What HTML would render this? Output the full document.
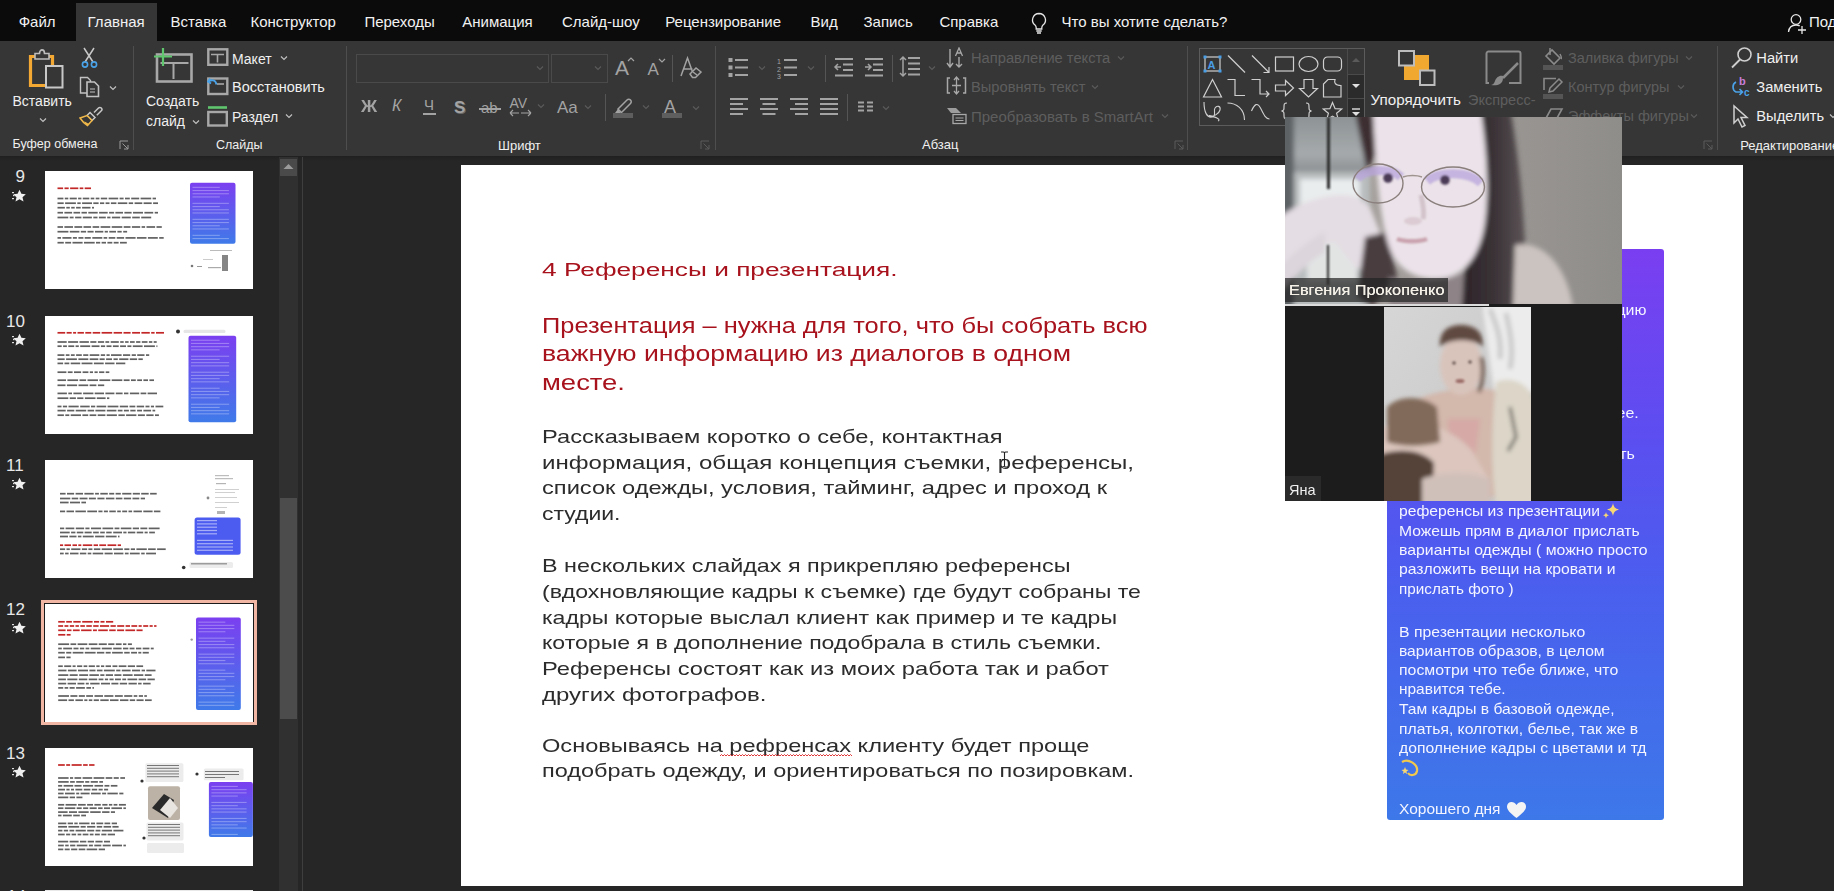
<!DOCTYPE html>
<html><head><meta charset="utf-8"><title>PowerPoint</title>
<style>
html,body{margin:0;padding:0}
body{width:1834px;height:891px;overflow:hidden;position:relative;background:#262626;font-family:"Liberation Sans",sans-serif}
.t{position:absolute;white-space:pre;line-height:1;font-family:"Liberation Sans",sans-serif}
.r{position:absolute;display:block}
</style></head><body>
<div class="r" style="left:0px;top:0px;width:1834px;height:41px;background:#0b0b0b;"></div>
<div class="r" style="left:76px;top:3px;width:81px;height:38px;background:#363636;"></div>
<div class="t " style="left:18.7px;top:14.30px;font-size:15px;color:#f2f2f2;font-weight:400;">Файл</div>
<div class="t " style="left:87.6px;top:14.30px;font-size:15px;color:#f2f2f2;font-weight:400;">Главная</div>
<div class="t " style="left:170.6px;top:14.30px;font-size:15px;color:#f2f2f2;font-weight:400;">Вставка</div>
<div class="t " style="left:250.4px;top:14.30px;font-size:15px;color:#f2f2f2;font-weight:400;">Конструктор</div>
<div class="t " style="left:364.4px;top:14.30px;font-size:15px;color:#f2f2f2;font-weight:400;">Переходы</div>
<div class="t " style="left:462.3px;top:14.30px;font-size:15px;color:#f2f2f2;font-weight:400;">Анимация</div>
<div class="t " style="left:562px;top:14.30px;font-size:15px;color:#f2f2f2;font-weight:400;">Слайд-шоу</div>
<div class="t " style="left:665.2px;top:14.30px;font-size:15px;color:#f2f2f2;font-weight:400;">Рецензирование</div>
<div class="t " style="left:810.6px;top:14.30px;font-size:15px;color:#f2f2f2;font-weight:400;">Вид</div>
<div class="t " style="left:863.5px;top:14.30px;font-size:15px;color:#f2f2f2;font-weight:400;">Запись</div>
<div class="t " style="left:939.4px;top:14.30px;font-size:15px;color:#f2f2f2;font-weight:400;">Справка</div>
<div class="t " style="left:1061.5px;top:14.30px;font-size:15px;color:#f2f2f2;font-weight:400;">Что вы хотите сделать?</div>
<div class="t " style="left:1809px;top:14.30px;font-size:15px;color:#f2f2f2;font-weight:400;">Поделиться</div>
<svg class="r" style="left:1028px;top:11px;" width="22" height="24" viewBox="0 0 22 24"><path d="M11 2.5a6.5 6.5 0 0 0-4 11.6c.8.7 1.2 1.6 1.2 2.6V18h5.6v-1.3c0-1 .4-1.9 1.2-2.6A6.5 6.5 0 0 0 11 2.5z" fill="none" stroke="#e6e6e6" stroke-width="1.3"/><path d="M8.3 20h5.4M9 22h4" stroke="#e6e6e6" stroke-width="1.3"/></svg>
<svg class="r" style="left:1786px;top:12px;" width="22" height="22" viewBox="0 0 22 22"><circle cx="10" cy="7.5" r="4.8" fill="none" stroke="#e6e6e6" stroke-width="1.3"/><path d="M2.5 20c.5-4.5 3.5-7 7.5-7 1.5 0 2.7.3 3.7.9" fill="none" stroke="#e6e6e6" stroke-width="1.3"/><path d="M16 14v8M12 18h8" stroke="#e6e6e6" stroke-width="1.3"/></svg>
<div class="r" style="left:0px;top:41px;width:1834px;height:115px;background:#363636;"></div>
<div class="r" style="left:133px;top:46px;width:1px;height:104px;background:#4e4e4e;"></div>
<div class="r" style="left:345.5px;top:46px;width:1px;height:104px;background:#4e4e4e;"></div>
<div class="r" style="left:714.5px;top:46px;width:1px;height:104px;background:#4e4e4e;"></div>
<div class="r" style="left:1187px;top:46px;width:1px;height:104px;background:#4e4e4e;"></div>
<div class="r" style="left:1717px;top:46px;width:1px;height:104px;background:#4e4e4e;"></div>
<svg class="r" style="left:27px;top:49px;" width="40" height="41" viewBox="0 0 40 41"><path d="M3.5 7.5h22v29h-22z" fill="none" stroke="#f2a833" stroke-width="3.2"/><path d="M8 4.5h4.5c0-2.5 1.5-3.6 2.5-3.6s2.5 1.1 2.5 3.6H22v5.5H8z" fill="#363636" stroke="#bdbdbd" stroke-width="1.6"/><rect x="19" y="17" width="16.5" height="21.5" fill="#363636" stroke="#c8c8c8" stroke-width="2"/></svg>
<div class="t " style="left:12.5px;top:94.15px;font-size:14px;color:#f0f0f0;font-weight:400;">Вставить</div>
<svg class="r" style="left:39px;top:117px;" width="8" height="6" viewBox="0 0 8 6"><path d="M1 1.5l3 3 3-3" fill="none" stroke="#c0c0c0" stroke-width="1.2"/></svg>
<svg class="r" style="left:81px;top:47px;" width="18" height="22" viewBox="0 0 18 22"><path d="M3 1l9 14M13 1L4 15" stroke="#c8c8c8" stroke-width="1.5"/><circle cx="4" cy="17.5" r="2.6" fill="none" stroke="#4aa3e8" stroke-width="1.6"/><circle cx="13" cy="17.5" r="2.6" fill="none" stroke="#4aa3e8" stroke-width="1.6"/></svg>
<svg class="r" style="left:79px;top:76px;" width="24" height="22" viewBox="0 0 24 22"><path d="M1.5 1.5h7l3 3V17h-10z" fill="none" stroke="#c2c2c2" stroke-width="1.4"/><path d="M8 6h7.5l4 4v10.5H8z" fill="#363636" stroke="#c2c2c2" stroke-width="1.6"/><path d="M11 13h5M11 16h5" stroke="#c2c2c2" stroke-width="1.2"/></svg>
<svg class="r" style="left:109px;top:85px;" width="8" height="6" viewBox="0 0 8 6"><path d="M1 1.5l3 3 3-3" fill="none" stroke="#c0c0c0" stroke-width="1.2"/></svg>
<svg class="r" style="left:79px;top:104px;" width="24" height="23" viewBox="0 0 24 23"><path d="M15 8.5l4.5-4.5c.8-.8 2-.8 2.8 0s.8 2 0 2.8L17.8 11.3" fill="none" stroke="#c8c8c8" stroke-width="1.5"/><path d="M11 8.5l5 5-3 3-5-5z" fill="#363636" stroke="#c8c8c8" stroke-width="1.5"/><path d="M8 11.5l5 5-4.5 5c-2.5-1.5-5.5-4.5-7.5-7.5z" fill="#363636" stroke="#f0b84a" stroke-width="1.5"/><path d="M5.2 17.3l4.8 2.6-1.5 1.6c-1.4-.8-2.4-1.8-3.3-4.2z" fill="#f0b84a"/></svg>
<div class="t " style="left:12.5px;top:138.42px;font-size:12.5px;color:#f0f0f0;font-weight:400;">Буфер обмена</div>
<svg class="r" style="left:119px;top:140px;" width="11" height="10" viewBox="0 0 11 10"><path d="M1 9V1h8" fill="none" stroke="#9a9a9a" stroke-width="1"/><path d="M3.5 3.5l5.5 5.5M9 5v4H5" fill="none" stroke="#9a9a9a" stroke-width="1"/></svg>
<svg class="r" style="left:152px;top:46px;" width="44" height="38" viewBox="0 0 44 38"><rect x="5" y="8.5" width="34.5" height="27" fill="none" stroke="#a8a8a8" stroke-width="2.6"/><path d="M8.5 17h28M21.5 17v16" stroke="#a8a8a8" stroke-width="2"/><path d="M2 10.5h18M11 2v18" stroke="#5fc66e" stroke-width="2.2"/></svg>
<div class="t " style="left:146px;top:94.15px;font-size:14px;color:#f0f0f0;font-weight:400;">Создать</div>
<div class="t " style="left:146px;top:113.65px;font-size:14px;color:#f0f0f0;font-weight:400;">слайд</div>
<svg class="r" style="left:192px;top:119px;" width="8" height="6" viewBox="0 0 8 6"><path d="M1 1.5l3 3 3-3" fill="none" stroke="#c0c0c0" stroke-width="1.2"/></svg>
<svg class="r" style="left:207px;top:48px;" width="22" height="19" viewBox="0 0 22 19"><rect x="1.3" y="1.3" width="19" height="15.5" fill="none" stroke="#a8a8a8" stroke-width="2.4"/><path d="M4 6.5h13M10.5 6.5v8" stroke="#a8a8a8" stroke-width="1.6"/></svg>
<div class="t " style="left:232px;top:52.35px;font-size:14px;color:#f0f0f0;font-weight:400;">Макет</div>
<svg class="r" style="left:279.5px;top:55px;" width="8" height="6" viewBox="0 0 8 6"><path d="M1 1.5l3 3 3-3" fill="none" stroke="#c0c0c0" stroke-width="1.2"/></svg>
<svg class="r" style="left:207px;top:76px;" width="22" height="20" viewBox="0 0 22 20"><rect x="1.3" y="2.5" width="19" height="15.5" fill="none" stroke="#a8a8a8" stroke-width="2.4"/><path d="M10 8h7" stroke="#a8a8a8" stroke-width="1.6"/><path d="M3 2.5l-2 3 3 2M1.5 5.5c3-2 7-2 8 3" fill="none" stroke="#4aa3e8" stroke-width="1.8"/></svg>
<div class="t " style="left:232px;top:80.23px;font-size:14.5px;color:#f0f0f0;font-weight:400;">Восстановить</div>
<svg class="r" style="left:207px;top:104px;" width="22" height="23" viewBox="0 0 22 23"><path d="M1 3.5h19" stroke="#5fc66e" stroke-width="2.6"/><rect x="1.3" y="8" width="18.5" height="13.5" fill="none" stroke="#a8a8a8" stroke-width="2.4"/></svg>
<div class="t " style="left:232px;top:109.65px;font-size:14px;color:#f0f0f0;font-weight:400;">Раздел</div>
<svg class="r" style="left:285px;top:113px;" width="8" height="6" viewBox="0 0 8 6"><path d="M1 1.5l3 3 3-3" fill="none" stroke="#c0c0c0" stroke-width="1.2"/></svg>
<div class="t " style="left:216px;top:139.12px;font-size:12.5px;color:#f0f0f0;font-weight:400;">Слайды</div>
<div class="r" style="left:356px;top:54px;width:193px;height:29px;background:transparent;border:1px solid #4a4a4a;box-sizing:border-box"></div>
<div class="r" style="left:551px;top:54px;width:57px;height:29px;background:transparent;border:1px solid #4a4a4a;box-sizing:border-box"></div>
<svg class="r" style="left:536px;top:65px;" width="8" height="6" viewBox="0 0 8 6"><path d="M1 1.5l3 3 3-3" fill="none" stroke="#5a5a5a" stroke-width="1.2"/></svg>
<svg class="r" style="left:594px;top:65px;" width="8" height="6" viewBox="0 0 8 6"><path d="M1 1.5l3 3 3-3" fill="none" stroke="#5a5a5a" stroke-width="1.2"/></svg>
<div class="t " style="left:615px;top:57.22px;font-size:21px;color:#a3a3a3;font-weight:400;font-weight:300">A</div>
<svg class="r" style="left:627px;top:56px;" width="8" height="6" viewBox="0 0 8 6"><path d="M1 5l3-3 3 3" fill="none" stroke="#a3a3a3" stroke-width="1.2"/></svg>
<div class="t " style="left:647.5px;top:60.61px;font-size:17px;color:#a3a3a3;font-weight:400;">A</div>
<svg class="r" style="left:658px;top:58px;" width="8" height="6" viewBox="0 0 8 6"><path d="M1 1l3 3 3-3" fill="none" stroke="#a3a3a3" stroke-width="1.2"/></svg>
<div class="r" style="left:672px;top:55px;width:1px;height:27px;background:#555;"></div>
<svg class="r" style="left:679px;top:56px;" width="24" height="24" viewBox="0 0 24 24"><path d="M2 20L8.5 2 15 20M4.5 13h9" fill="none" stroke="#a3a3a3" stroke-width="1.5"/><path d="M11 18l6-6 5 4-5.5 5.5h-3z" fill="#363636" stroke="#a3a3a3" stroke-width="1.5"/><path d="M14 16l4 3" stroke="#a3a3a3" stroke-width="1.5"/></svg>
<div class="t " style="left:361px;top:97.61px;font-size:17px;color:#a3a3a3;font-weight:400;transform:scaleX(1.05);transform-origin:0 0;font-weight:700">Ж</div>
<div class="t " style="left:392px;top:98.46px;font-size:16px;color:#a3a3a3;font-weight:400;font-style:italic">К</div>
<div class="t " style="left:424px;top:97.30px;font-size:15px;color:#a3a3a3;font-weight:400;">Ч</div>
<div class="r" style="left:423px;top:113px;width:13px;height:1.5px;background:#a3a3a3;"></div>
<div class="t " style="left:454px;top:98.61px;font-size:17px;color:#a3a3a3;font-weight:400;font-weight:700;text-shadow:1px 1px 0 #6a6a6a">S</div>
<div class="t " style="left:481px;top:100.30px;font-size:15px;color:#a3a3a3;font-weight:400;">ab</div>
<div class="r" style="left:479px;top:108px;width:22px;height:1.5px;background:#a3a3a3;"></div>
<div class="t " style="left:509.5px;top:96.15px;font-size:14px;color:#a3a3a3;font-weight:400;">AV</div>
<svg class="r" style="left:509px;top:109px;" width="23" height="8" viewBox="0 0 23 8"><path d="M1 4h9M1 4l3-3M1 4l3 3M12 4h10M22 4l-3-3M22 4l-3 3" fill="none" stroke="#a3a3a3" stroke-width="1.1"/></svg>
<svg class="r" style="left:537px;top:103px;" width="8" height="6" viewBox="0 0 8 6"><path d="M1 1.5l3 3 3-3" fill="none" stroke="#5a5a5a" stroke-width="1.2"/></svg>
<div class="t " style="left:557px;top:98.61px;font-size:17px;color:#a3a3a3;font-weight:400;">Aa</div>
<svg class="r" style="left:584px;top:104px;" width="8" height="6" viewBox="0 0 8 6"><path d="M1 1.5l3 3 3-3" fill="none" stroke="#5a5a5a" stroke-width="1.2"/></svg>
<div class="r" style="left:604.5px;top:94px;width:1px;height:27px;background:#555;"></div>
<svg class="r" style="left:612px;top:96px;" width="22" height="24" viewBox="0 0 22 24"><path d="M6 13l9-9c1-1 2.5-1 3.5 0s1 2.5 0 3.5l-9 9z" fill="none" stroke="#a3a3a3" stroke-width="1.5"/><path d="M6 13l-3 4h6" fill="#a3a3a3"/><rect x="1" y="17" width="20" height="5" fill="#5e5e5e"/></svg>
<svg class="r" style="left:642px;top:104px;" width="8" height="6" viewBox="0 0 8 6"><path d="M1 1.5l3 3 3-3" fill="none" stroke="#5a5a5a" stroke-width="1.2"/></svg>
<div class="t " style="left:664px;top:97.76px;font-size:18px;color:#a3a3a3;font-weight:400;">A</div>
<div class="r" style="left:662px;top:113px;width:20px;height:5px;background:#5e5e5e;"></div>
<svg class="r" style="left:692px;top:105px;" width="8" height="6" viewBox="0 0 8 6"><path d="M1 1.5l3 3 3-3" fill="none" stroke="#5a5a5a" stroke-width="1.2"/></svg>
<div class="t " style="left:498px;top:138.70px;font-size:13px;color:#f0f0f0;font-weight:400;">Шрифт</div>
<svg class="r" style="left:700px;top:140px;" width="11" height="10" viewBox="0 0 11 10"><path d="M1 9V1h8" fill="none" stroke="#5a5a5a" stroke-width="1"/><path d="M3.5 3.5l5.5 5.5M9 5v4H5" fill="none" stroke="#5a5a5a" stroke-width="1"/></svg>
<svg class="r" style="left:727px;top:56px;" width="24" height="22" viewBox="0 0 24 22"><rect x="1.5" y="2.0" width="4" height="4" fill="#a3a3a3"/><path d="M8 4.0h13" stroke="#a3a3a3" stroke-width="2"/><rect x="1.5" y="9.5" width="4" height="4" fill="#a3a3a3"/><path d="M8 11.5h13" stroke="#a3a3a3" stroke-width="2"/><rect x="1.5" y="17.0" width="4" height="4" fill="#a3a3a3"/><path d="M8 19.0h13" stroke="#a3a3a3" stroke-width="2"/></svg>
<svg class="r" style="left:758px;top:65px;" width="8" height="6" viewBox="0 0 8 6"><path d="M1 1.5l3 3 3-3" fill="none" stroke="#5a5a5a" stroke-width="1.2"/></svg>
<svg class="r" style="left:776px;top:55px;" width="24" height="24" viewBox="0 0 24 24"><text x="1" y="9" font-size="7" fill="#a3a3a3" font-family="Liberation Sans">1</text><text x="1" y="16.5" font-size="7" fill="#a3a3a3" font-family="Liberation Sans">2</text><text x="1" y="24" font-size="7" fill="#a3a3a3" font-family="Liberation Sans">3</text><path d="M8 5.0h13" stroke="#a3a3a3" stroke-width="2"/><path d="M8 12.5h13" stroke="#a3a3a3" stroke-width="2"/><path d="M8 20.0h13" stroke="#a3a3a3" stroke-width="2"/></svg>
<svg class="r" style="left:807px;top:65px;" width="8" height="6" viewBox="0 0 8 6"><path d="M1 1.5l3 3 3-3" fill="none" stroke="#5a5a5a" stroke-width="1.2"/></svg>
<div class="r" style="left:825px;top:55px;width:1px;height:27px;background:#555;"></div>
<svg class="r" style="left:833px;top:56px;" width="24" height="22" viewBox="0 0 24 22"><path d="M2 3h18M10 8.5h10M10 14h10M2 19.5h18" stroke="#a3a3a3" stroke-width="2"/><path d="M8 11H2M5 8l-3 3 3 3" fill="none" stroke="#a3a3a3" stroke-width="1.5"/></svg>
<svg class="r" style="left:863px;top:56px;" width="24" height="22" viewBox="0 0 24 22"><path d="M2 3h18M10 8.5h10M10 14h10M2 19.5h18" stroke="#a3a3a3" stroke-width="2"/><path d="M2 11h6M5 8l3 3-3 3" fill="none" stroke="#a3a3a3" stroke-width="1.5"/></svg>
<div class="r" style="left:892px;top:55px;width:1px;height:27px;background:#555;"></div>
<svg class="r" style="left:899px;top:55px;" width="26" height="24" viewBox="0 0 26 24"><path d="M9 3h12M9 8.5h12M9 14h12M9 19.5h12" stroke="#a3a3a3" stroke-width="2"/><path d="M4 2v19M1 5l3-3 3 3M1 18l3 3 3-3" fill="none" stroke="#a3a3a3" stroke-width="1.5"/></svg>
<svg class="r" style="left:928px;top:65px;" width="8" height="6" viewBox="0 0 8 6"><path d="M1 1.5l3 3 3-3" fill="none" stroke="#5a5a5a" stroke-width="1.2"/></svg>
<svg class="r" style="left:730px;top:98px;" width="19" height="18" viewBox="0 0 19 18"><path d="M0 1h18" stroke="#a3a3a3" stroke-width="2"/><path d="M0 6h13" stroke="#a3a3a3" stroke-width="2"/><path d="M0 11h18" stroke="#a3a3a3" stroke-width="2"/><path d="M0 16h13" stroke="#a3a3a3" stroke-width="2"/></svg>
<svg class="r" style="left:760px;top:98px;" width="19" height="18" viewBox="0 0 19 18"><path d="M0 1h18" stroke="#a3a3a3" stroke-width="2"/><path d="M2.5 6h13" stroke="#a3a3a3" stroke-width="2"/><path d="M0 11h18" stroke="#a3a3a3" stroke-width="2"/><path d="M2.5 16h13" stroke="#a3a3a3" stroke-width="2"/></svg>
<svg class="r" style="left:790px;top:98px;" width="19" height="18" viewBox="0 0 19 18"><path d="M0 1h18" stroke="#a3a3a3" stroke-width="2"/><path d="M5 6h13" stroke="#a3a3a3" stroke-width="2"/><path d="M0 11h18" stroke="#a3a3a3" stroke-width="2"/><path d="M5 16h13" stroke="#a3a3a3" stroke-width="2"/></svg>
<svg class="r" style="left:820px;top:98px;" width="19" height="18" viewBox="0 0 19 18"><path d="M0 1h18" stroke="#a3a3a3" stroke-width="2"/><path d="M0 6h18" stroke="#a3a3a3" stroke-width="2"/><path d="M0 11h18" stroke="#a3a3a3" stroke-width="2"/><path d="M0 16h18" stroke="#a3a3a3" stroke-width="2"/></svg>
<div class="r" style="left:847px;top:94px;width:1px;height:27px;background:#555;"></div>
<svg class="r" style="left:857px;top:101px;" width="18" height="12" viewBox="0 0 18 12"><path d="M1 1.5h6M10 1.5h6M1 5.5h6M10 5.5h6M1 9.5h6M10 9.5h6" stroke="#a3a3a3" stroke-width="2"/></svg>
<svg class="r" style="left:882px;top:105px;" width="8" height="6" viewBox="0 0 8 6"><path d="M1 1.5l3 3 3-3" fill="none" stroke="#5a5a5a" stroke-width="1.2"/></svg>
<svg class="r" style="left:946px;top:47px;" width="22" height="23" viewBox="0 0 22 23"><path d="M4 2v18M1 16l3 4 3-4M13 10v10M10 17l3 3 3-3" fill="none" stroke="#a8a8a8" stroke-width="1.4"/><path d="M9.5 9l3.5-8 3.5 8M10.8 6h4.5" fill="none" stroke="#a8a8a8" stroke-width="1.3"/></svg>
<div class="t " style="left:971px;top:51.26px;font-size:14.7px;color:#5e5e5e;font-weight:400;">Направление текста</div>
<svg class="r" style="left:1117px;top:55px;" width="8" height="6" viewBox="0 0 8 6"><path d="M1 1.5l3 3 3-3" fill="none" stroke="#5a5a5a" stroke-width="1.2"/></svg>
<svg class="r" style="left:946px;top:76px;" width="22" height="20" viewBox="0 0 22 20"><path d="M4 2H1.5v15H4M17 2h2.5v15H17" fill="none" stroke="#a8a8a8" stroke-width="1.5"/><path d="M6 9.5h9M10.5 1v17M8 4l2.5-3 2.5 3M8 15l2.5 3 2.5-3" fill="none" stroke="#a8a8a8" stroke-width="1.3"/></svg>
<div class="t " style="left:971px;top:79.76px;font-size:14.7px;color:#5e5e5e;font-weight:400;">Выровнять текст</div>
<svg class="r" style="left:1091px;top:84px;" width="8" height="6" viewBox="0 0 8 6"><path d="M1 1.5l3 3 3-3" fill="none" stroke="#5a5a5a" stroke-width="1.2"/></svg>
<svg class="r" style="left:946px;top:107px;" width="22" height="18" viewBox="0 0 22 18"><path d="M1 1h9l5 5H5z" fill="#a8a8a8" opacity=".9"/><rect x="7" y="7.5" width="13" height="9" fill="#363636" stroke="#a8a8a8" stroke-width="1.3"/><path d="M9.5 11h8M9.5 13.5h8" stroke="#a8a8a8" stroke-width="1"/></svg>
<div class="t " style="left:971px;top:108.70px;font-size:15px;color:#5e5e5e;font-weight:400;">Преобразовать в SmartArt</div>
<svg class="r" style="left:1161px;top:113px;" width="8" height="6" viewBox="0 0 8 6"><path d="M1 1.5l3 3 3-3" fill="none" stroke="#5a5a5a" stroke-width="1.2"/></svg>
<div class="t " style="left:922px;top:138.00px;font-size:13px;color:#f0f0f0;font-weight:400;">Абзац</div>
<svg class="r" style="left:1174px;top:140px;" width="11" height="10" viewBox="0 0 11 10"><path d="M1 9V1h8" fill="none" stroke="#5a5a5a" stroke-width="1"/><path d="M3.5 3.5l5.5 5.5M9 5v4H5" fill="none" stroke="#5a5a5a" stroke-width="1"/></svg>
<div class="r" style="left:1199px;top:48px;width:166px;height:78px;background:transparent;border:1px solid #5c5c5c;box-sizing:border-box"></div>
<div class="r" style="left:1347px;top:49px;width:1px;height:76px;background:#4a4a4a;"></div>
<div class="r" style="left:1348px;top:74px;width:16px;height:24px;background:#2b2b2b;"></div>
<div class="r" style="left:1348px;top:99px;width:16px;height:26px;background:#2b2b2b;"></div>
<div class="r" style="left:1348px;top:74px;width:16px;height:1px;background:#4a4a4a;"></div>
<div class="r" style="left:1348px;top:98px;width:16px;height:1px;background:#4a4a4a;"></div>
<svg class="r" style="left:1350px;top:56px;" width="12" height="8" viewBox="0 0 12 8"><path d="M2 6l4-4 4 4z" fill="#5a5a5a"/></svg>
<svg class="r" style="left:1350px;top:82px;" width="12" height="8" viewBox="0 0 12 8"><path d="M2 2l4 4 4-4z" fill="#e0e0e0"/></svg>
<svg class="r" style="left:1350px;top:107px;" width="12" height="12" viewBox="0 0 12 12"><path d="M2 2h8" stroke="#e0e0e0" stroke-width="1.4"/><path d="M2 5l4 4 4-4z" fill="#e0e0e0"/></svg>
<svg class="r" style="left:1202px;top:54.0px;" width="22" height="21" viewBox="0 0 22 21"><rect x="3" y="3" width="15" height="14" fill="none" stroke="#cfcfcf" stroke-width="1.2"/><text x="5.5" y="14.5" font-size="11" font-weight="700" fill="#4a9ee6" font-family="Liberation Sans">A</text><g fill="#4a9ee6"><rect x="1.5" y="1.5" width="3" height="3"/><rect x="16.5" y="1.5" width="3" height="3"/><rect x="1.5" y="15.5" width="3" height="3"/><rect x="16.5" y="15.5" width="3" height="3"/></g></svg>
<svg class="r" style="left:1226px;top:54.0px;" width="22" height="21" viewBox="0 0 22 21"><path d="M2 1.5l17 17" stroke="#cfcfcf" stroke-width="1.2"/></svg>
<svg class="r" style="left:1250px;top:54.0px;" width="22" height="21" viewBox="0 0 22 21"><path d="M2 1.5l17 17M13.5 18.5h5.5v-5.5" fill="none" stroke="#cfcfcf" stroke-width="1.2"/></svg>
<svg class="r" style="left:1274px;top:54.0px;" width="22" height="21" viewBox="0 0 22 21"><rect x="1.5" y="3" width="18" height="14" fill="none" stroke="#cfcfcf" stroke-width="1.2"/></svg>
<svg class="r" style="left:1298px;top:54.0px;" width="22" height="21" viewBox="0 0 22 21"><ellipse cx="10.5" cy="10" rx="9.5" ry="7.5" fill="none" stroke="#cfcfcf" stroke-width="1.2"/></svg>
<svg class="r" style="left:1322px;top:54.0px;" width="22" height="21" viewBox="0 0 22 21"><rect x="1.5" y="3" width="18" height="14" rx="4" fill="none" stroke="#cfcfcf" stroke-width="1.2"/></svg>
<svg class="r" style="left:1202px;top:77.5px;" width="22" height="21" viewBox="0 0 22 21"><path d="M10.5 1.5l9 17.5h-18z" fill="none" stroke="#cfcfcf" stroke-width="1.2"/></svg>
<svg class="r" style="left:1226px;top:77.5px;" width="22" height="21" viewBox="0 0 22 21"><path d="M1.5 1.5h7.5v16h10" fill="none" stroke="#cfcfcf" stroke-width="1.2"/></svg>
<svg class="r" style="left:1250px;top:77.5px;" width="22" height="21" viewBox="0 0 22 21"><path d="M1.5 1.5h8.5v14.5h9M16 13l3 3-3 3" fill="none" stroke="#cfcfcf" stroke-width="1.2"/></svg>
<svg class="r" style="left:1274px;top:77.5px;" width="22" height="21" viewBox="0 0 22 21"><path d="M1.5 7h10V2.5l8 7.5-8 7.5V13h-10z" fill="none" stroke="#cfcfcf" stroke-width="1.2"/></svg>
<svg class="r" style="left:1298px;top:77.5px;" width="22" height="21" viewBox="0 0 22 21"><path d="M6 1.5h9v9h4.5l-9 8.5-9-8.5H6z" fill="none" stroke="#cfcfcf" stroke-width="1.2"/></svg>
<svg class="r" style="left:1322px;top:77.5px;" width="22" height="21" viewBox="0 0 22 21"><path d="M6 1.5h7c-1 3 0 6 6 6V19H1.5V6z" fill="none" stroke="#cfcfcf" stroke-width="1.2"/></svg>
<svg class="r" style="left:1202px;top:101.0px;" width="22" height="21" viewBox="0 0 22 21"><path d="M2 1c0 10 3 16 8 15s1-6 3-9 6-2 5 2-7 7-10 6 3 0 7 2 1 3 1 3" fill="none" stroke="#cfcfcf" stroke-width="1.1"/></svg>
<svg class="r" style="left:1226px;top:101.0px;" width="22" height="21" viewBox="0 0 22 21"><path d="M1.5 2c9 0 17 6 17 17" fill="none" stroke="#cfcfcf" stroke-width="1.1"/></svg>
<svg class="r" style="left:1250px;top:101.0px;" width="22" height="21" viewBox="0 0 22 21"><path d="M1.5 10c3-7 6-9 9-3s5 11 9 11" fill="none" stroke="#cfcfcf" stroke-width="1.1"/></svg>
<svg class="r" style="left:1274px;top:101.0px;" width="22" height="21" viewBox="0 0 22 21"><path d="M13 2c-3 0-3 1.5-3 4s0 3.5-2.5 4c2.5.5 2.5 1.5 2.5 4s0 4 3 4" fill="none" stroke="#cfcfcf" stroke-width="1.2"/></svg>
<svg class="r" style="left:1298px;top:101.0px;" width="22" height="21" viewBox="0 0 22 21"><path d="M8 2c3 0 3 1.5 3 4s0 3.5 2.5 4c-2.5.5-2.5 1.5-2.5 4s0 4-3 4" fill="none" stroke="#cfcfcf" stroke-width="1.2"/></svg>
<svg class="r" style="left:1322px;top:101.0px;" width="22" height="21" viewBox="0 0 22 21"><path d="M10.5 1.5l2.6 6.2 6.6.3-5.1 4.3 1.8 6.5-5.9-3.7-5.9 3.7 1.8-6.5L1.3 8l6.6-.3z" fill="none" stroke="#cfcfcf" stroke-width="1.2"/></svg>
<svg class="r" style="left:1397px;top:49px;" width="40" height="38" viewBox="0 0 40 38"><rect x="7" y="6" width="25" height="25" fill="#f0a830"/><rect x="2" y="2" width="15" height="14.5" fill="#363636" stroke="#bdbdbd" stroke-width="2"/><rect x="23" y="21.5" width="14.5" height="14.5" fill="#363636" stroke="#bdbdbd" stroke-width="2"/></svg>
<div class="t " style="left:1370.5px;top:91.93px;font-size:15.2px;color:#f0f0f0;font-weight:400;">Упорядочить</div>
<svg class="r" style="left:1483px;top:49px;" width="42" height="40" viewBox="0 0 42 40"><path d="M6 34H3.5V4.5a2 2 0 0 1 2-2h30a2 2 0 0 1 2 2V34H26" fill="none" stroke="#8a8a8a" stroke-width="2"/><path d="M35 14L20 29" stroke="#8a8a8a" stroke-width="2.5"/><path d="M20 27c-4-1-7 2-8 5s-3 4-4 4c5 1 12 0 12-7z" fill="#8a8a8a"/></svg>
<div class="t " style="left:1468px;top:92.53px;font-size:14.5px;color:#5e5e5e;font-weight:400;">Экспресс-</div>
<svg class="r" style="left:1541px;top:46px;" width="26" height="24" viewBox="0 0 26 24"><path d="M5 10l6-6 8 8-6 6z" fill="none" stroke="#8a8a8a" stroke-width="1.6"/><path d="M9 2v7M19 8c1 2 2 4 1 5" fill="none" stroke="#8a8a8a" stroke-width="1.5"/><rect x="2" y="19" width="20" height="5" fill="#555"/></svg>
<div class="t " style="left:1568px;top:51.23px;font-size:14.5px;color:#5e5e5e;font-weight:400;">Заливка фигуры</div>
<svg class="r" style="left:1685px;top:55px;" width="8" height="6" viewBox="0 0 8 6"><path d="M1 1.5l3 3 3-3" fill="none" stroke="#5a5a5a" stroke-width="1.2"/></svg>
<svg class="r" style="left:1541px;top:75px;" width="26" height="24" viewBox="0 0 26 24"><path d="M3 15V3.5h12" fill="none" stroke="#8a8a8a" stroke-width="1.6"/><path d="M9 13l9-9 3 3-9 9-4 1z" fill="none" stroke="#8a8a8a" stroke-width="1.5"/><rect x="2" y="19" width="20" height="5" fill="#555"/></svg>
<div class="t " style="left:1568px;top:79.73px;font-size:14.5px;color:#5e5e5e;font-weight:400;">Контур фигуры</div>
<svg class="r" style="left:1677px;top:84px;" width="8" height="6" viewBox="0 0 8 6"><path d="M1 1.5l3 3 3-3" fill="none" stroke="#5a5a5a" stroke-width="1.2"/></svg>
<svg class="r" style="left:1541px;top:104px;" width="26" height="20" viewBox="0 0 26 20"><path d="M4 16l6-11h11l-6 11z" fill="none" stroke="#8a8a8a" stroke-width="1.6"/></svg>
<div class="t " style="left:1568px;top:108.73px;font-size:14.5px;color:#5e5e5e;font-weight:400;">Эффекты фигуры</div>
<svg class="r" style="left:1690px;top:113px;" width="8" height="6" viewBox="0 0 8 6"><path d="M1 1.5l3 3 3-3" fill="none" stroke="#5a5a5a" stroke-width="1.2"/></svg>
<svg class="r" style="left:1703px;top:140px;" width="11" height="10" viewBox="0 0 11 10"><path d="M1 9V1h8" fill="none" stroke="#5a5a5a" stroke-width="1"/><path d="M3.5 3.5l5.5 5.5M9 5v4H5" fill="none" stroke="#5a5a5a" stroke-width="1"/></svg>
<svg class="r" style="left:1730px;top:46px;" width="24" height="23" viewBox="0 0 24 23"><circle cx="14.5" cy="8.5" r="6.5" fill="none" stroke="#cfcfcf" stroke-width="1.6"/><path d="M10 13.5L2 21.5" stroke="#cfcfcf" stroke-width="1.8"/></svg>
<div class="t " style="left:1756.3px;top:51.36px;font-size:14.7px;color:#f0f0f0;font-weight:400;">Найти</div>
<svg class="r" style="left:1730px;top:75px;" width="24" height="24" viewBox="0 0 24 24"><text x="9" y="10" font-size="11" font-weight="700" fill="#c77ed9" font-family="Liberation Sans">b</text><text x="14" y="21" font-size="10" font-weight="700" fill="#4aa3e8" font-family="Liberation Sans">c</text><path d="M6 7c-4 2-4 8 0 10h6M9.5 14l3 3-3 3" fill="none" stroke="#4aa3e8" stroke-width="1.6"/></svg>
<div class="t " style="left:1756.3px;top:79.56px;font-size:14.7px;color:#f0f0f0;font-weight:400;">Заменить</div>
<svg class="r" style="left:1731px;top:104px;" width="20" height="24" viewBox="0 0 20 24"><path d="M3 2v17l4-4 4 8 3-1.5-4-8h6z" fill="none" stroke="#cfcfcf" stroke-width="1.5"/></svg>
<div class="t " style="left:1756.3px;top:108.56px;font-size:14.7px;color:#f0f0f0;font-weight:400;">Выделить</div>
<svg class="r" style="left:1829px;top:113px;" width="8" height="6" viewBox="0 0 8 6"><path d="M1 1.5l3 3 3-3" fill="none" stroke="#c0c0c0" stroke-width="1.2"/></svg>
<div class="t " style="left:1740.2px;top:139.00px;font-size:13px;color:#f0f0f0;font-weight:400;">Редактирование</div>
<div class="r" style="left:0px;top:156px;width:1834px;height:735px;background:#262626;"></div>
<div class="r" style="left:0px;top:156px;width:1834px;height:5px;background:linear-gradient(#202020,#262626);"></div>
<div class="r" style="left:279px;top:157px;width:19px;height:734px;background:#303030;"></div>
<div class="r" style="left:280px;top:158.5px;width:17px;height:17.5px;background:#4a4a4a;"></div>
<svg class="r" style="left:282px;top:161px;" width="13" height="10" viewBox="0 0 13 10"><path d="M1.5 8l5-5 5 5z" fill="#9a9a9a"/></svg>
<div class="r" style="left:280px;top:497.5px;width:17px;height:221.5px;background:#4c4c4c;"></div>
<div class="r" style="left:302px;top:157px;width:1px;height:734px;background:#3e3e3e;"></div>
<svg class="r" style="left:45px;top:171px;" width="208" height="118" viewBox="0 0 208 118"><rect width="208" height="118" fill="#fff"/><rect x="12.5" y="16.45" width="5.6" height="1.7" fill="#b80000" opacity="0.85"/><rect x="19.5" y="16.45" width="4.2" height="1.7" fill="#b80000" opacity="0.85"/><rect x="25.1" y="16.45" width="8.2" height="1.7" fill="#b80000" opacity="0.85"/><rect x="34.7" y="16.45" width="3.6" height="1.7" fill="#b80000" opacity="0.85"/><rect x="39.7" y="16.45" width="6.3" height="1.7" fill="#b80000" opacity="0.85"/><rect x="12.5" y="26.65" width="5.9" height="1.7" fill="#151515" opacity="0.68"/><rect x="19.8" y="26.65" width="3.5" height="1.7" fill="#151515" opacity="0.68"/><rect x="24.7" y="26.65" width="7.1" height="1.7" fill="#151515" opacity="0.68"/><rect x="33.1" y="26.65" width="3.3" height="1.7" fill="#151515" opacity="0.68"/><rect x="37.8" y="26.65" width="6.5" height="1.7" fill="#151515" opacity="0.68"/><rect x="45.7" y="26.65" width="3.6" height="1.7" fill="#151515" opacity="0.68"/><rect x="50.7" y="26.65" width="3.7" height="1.7" fill="#151515" opacity="0.68"/><rect x="55.8" y="26.65" width="6.4" height="1.7" fill="#151515" opacity="0.68"/><rect x="63.6" y="26.65" width="9.6" height="1.7" fill="#151515" opacity="0.68"/><rect x="74.6" y="26.65" width="4.0" height="1.7" fill="#151515" opacity="0.68"/><rect x="80.0" y="26.65" width="4.8" height="1.7" fill="#151515" opacity="0.68"/><rect x="86.2" y="26.65" width="8.0" height="1.7" fill="#151515" opacity="0.68"/><rect x="95.6" y="26.65" width="10.6" height="1.7" fill="#151515" opacity="0.68"/><rect x="107.6" y="26.65" width="3.4" height="1.7" fill="#151515" opacity="0.68"/><rect x="12.5" y="31.35" width="6.2" height="1.7" fill="#151515" opacity="0.68"/><rect x="20.1" y="31.35" width="10.8" height="1.7" fill="#151515" opacity="0.68"/><rect x="32.3" y="31.35" width="3.4" height="1.7" fill="#151515" opacity="0.68"/><rect x="37.1" y="31.35" width="9.9" height="1.7" fill="#151515" opacity="0.68"/><rect x="48.3" y="31.35" width="5.3" height="1.7" fill="#151515" opacity="0.68"/><rect x="55.0" y="31.35" width="4.2" height="1.7" fill="#151515" opacity="0.68"/><rect x="60.6" y="31.35" width="3.9" height="1.7" fill="#151515" opacity="0.68"/><rect x="65.9" y="31.35" width="5.5" height="1.7" fill="#151515" opacity="0.68"/><rect x="72.8" y="31.35" width="9.5" height="1.7" fill="#151515" opacity="0.68"/><rect x="83.7" y="31.35" width="4.4" height="1.7" fill="#151515" opacity="0.68"/><rect x="89.6" y="31.35" width="7.7" height="1.7" fill="#151515" opacity="0.68"/><rect x="98.6" y="31.35" width="8.1" height="1.7" fill="#151515" opacity="0.68"/><rect x="108.1" y="31.35" width="4.9" height="1.7" fill="#151515" opacity="0.68"/><rect x="12.5" y="35.85" width="7.4" height="1.7" fill="#151515" opacity="0.68"/><rect x="21.3" y="35.85" width="3.5" height="1.7" fill="#151515" opacity="0.68"/><rect x="26.2" y="35.85" width="3.5" height="1.7" fill="#151515" opacity="0.68"/><rect x="31.1" y="35.85" width="4.6" height="1.7" fill="#151515" opacity="0.68"/><rect x="37.1" y="35.85" width="8.4" height="1.7" fill="#151515" opacity="0.68"/><rect x="47.0" y="35.85" width="2.0" height="1.7" fill="#151515" opacity="0.68"/><rect x="12.5" y="40.85" width="5.5" height="1.7" fill="#151515" opacity="0.68"/><rect x="19.4" y="40.85" width="7.7" height="1.7" fill="#151515" opacity="0.68"/><rect x="28.5" y="40.85" width="6.6" height="1.7" fill="#151515" opacity="0.68"/><rect x="36.5" y="40.85" width="5.4" height="1.7" fill="#151515" opacity="0.68"/><rect x="43.3" y="40.85" width="9.4" height="1.7" fill="#151515" opacity="0.68"/><rect x="54.1" y="40.85" width="8.6" height="1.7" fill="#151515" opacity="0.68"/><rect x="64.1" y="40.85" width="5.0" height="1.7" fill="#151515" opacity="0.68"/><rect x="70.4" y="40.85" width="7.6" height="1.7" fill="#151515" opacity="0.68"/><rect x="79.4" y="40.85" width="7.2" height="1.7" fill="#151515" opacity="0.68"/><rect x="88.0" y="40.85" width="10.0" height="1.7" fill="#151515" opacity="0.68"/><rect x="99.4" y="40.85" width="8.8" height="1.7" fill="#151515" opacity="0.68"/><rect x="109.7" y="40.85" width="3.3" height="1.7" fill="#151515" opacity="0.68"/><rect x="12.5" y="45.65" width="10.8" height="1.7" fill="#151515" opacity="0.68"/><rect x="24.7" y="45.65" width="3.9" height="1.7" fill="#151515" opacity="0.68"/><rect x="30.1" y="45.65" width="6.3" height="1.7" fill="#151515" opacity="0.68"/><rect x="37.8" y="45.65" width="9.1" height="1.7" fill="#151515" opacity="0.68"/><rect x="48.3" y="45.65" width="4.2" height="1.7" fill="#151515" opacity="0.68"/><rect x="53.9" y="45.65" width="6.9" height="1.7" fill="#151515" opacity="0.68"/><rect x="62.2" y="45.65" width="3.3" height="1.7" fill="#151515" opacity="0.68"/><rect x="66.9" y="45.65" width="8.3" height="1.7" fill="#151515" opacity="0.68"/><rect x="76.7" y="45.65" width="9.1" height="1.7" fill="#151515" opacity="0.68"/><rect x="87.2" y="45.65" width="7.6" height="1.7" fill="#151515" opacity="0.68"/><rect x="96.2" y="45.65" width="10.0" height="1.7" fill="#151515" opacity="0.68"/><rect x="12.5" y="55.15" width="5.5" height="1.7" fill="#151515" opacity="0.68"/><rect x="19.4" y="55.15" width="8.6" height="1.7" fill="#151515" opacity="0.68"/><rect x="29.4" y="55.15" width="7.8" height="1.7" fill="#151515" opacity="0.68"/><rect x="38.5" y="55.15" width="7.6" height="1.7" fill="#151515" opacity="0.68"/><rect x="47.6" y="55.15" width="6.6" height="1.7" fill="#151515" opacity="0.68"/><rect x="55.6" y="55.15" width="9.7" height="1.7" fill="#151515" opacity="0.68"/><rect x="66.7" y="55.15" width="10.6" height="1.7" fill="#151515" opacity="0.68"/><rect x="78.7" y="55.15" width="6.8" height="1.7" fill="#151515" opacity="0.68"/><rect x="86.9" y="55.15" width="8.3" height="1.7" fill="#151515" opacity="0.68"/><rect x="96.6" y="55.15" width="3.5" height="1.7" fill="#151515" opacity="0.68"/><rect x="101.5" y="55.15" width="8.6" height="1.7" fill="#151515" opacity="0.68"/><rect x="111.5" y="55.15" width="5.3" height="1.7" fill="#151515" opacity="0.68"/><rect x="12.5" y="59.85" width="10.9" height="1.7" fill="#151515" opacity="0.68"/><rect x="24.8" y="59.85" width="9.6" height="1.7" fill="#151515" opacity="0.68"/><rect x="35.8" y="59.85" width="5.3" height="1.7" fill="#151515" opacity="0.68"/><rect x="42.5" y="59.85" width="6.1" height="1.7" fill="#151515" opacity="0.68"/><rect x="50.0" y="59.85" width="8.3" height="1.7" fill="#151515" opacity="0.68"/><rect x="59.7" y="59.85" width="3.2" height="1.7" fill="#151515" opacity="0.68"/><rect x="64.3" y="59.85" width="6.7" height="1.7" fill="#151515" opacity="0.68"/><rect x="72.4" y="59.85" width="4.3" height="1.7" fill="#151515" opacity="0.68"/><rect x="78.2" y="59.85" width="3.9" height="1.7" fill="#151515" opacity="0.68"/><rect x="12.5" y="66.05" width="3.5" height="1.7" fill="#151515" opacity="0.68"/><rect x="17.4" y="66.05" width="9.1" height="1.7" fill="#151515" opacity="0.68"/><rect x="27.9" y="66.05" width="4.0" height="1.7" fill="#151515" opacity="0.68"/><rect x="33.4" y="66.05" width="5.0" height="1.7" fill="#151515" opacity="0.68"/><rect x="39.7" y="66.05" width="6.1" height="1.7" fill="#151515" opacity="0.68"/><rect x="47.3" y="66.05" width="10.0" height="1.7" fill="#151515" opacity="0.68"/><rect x="58.6" y="66.05" width="3.6" height="1.7" fill="#151515" opacity="0.68"/><rect x="63.7" y="66.05" width="6.6" height="1.7" fill="#151515" opacity="0.68"/><rect x="71.7" y="66.05" width="7.4" height="1.7" fill="#151515" opacity="0.68"/><rect x="80.5" y="66.05" width="10.1" height="1.7" fill="#151515" opacity="0.68"/><rect x="91.9" y="66.05" width="9.6" height="1.7" fill="#151515" opacity="0.68"/><rect x="102.9" y="66.05" width="9.9" height="1.7" fill="#151515" opacity="0.68"/><rect x="114.2" y="66.05" width="4.5" height="1.7" fill="#151515" opacity="0.68"/><rect x="12.5" y="70.85" width="6.3" height="1.7" fill="#151515" opacity="0.68"/><rect x="20.2" y="70.85" width="5.9" height="1.7" fill="#151515" opacity="0.68"/><rect x="27.5" y="70.85" width="10.1" height="1.7" fill="#151515" opacity="0.68"/><rect x="39.0" y="70.85" width="10.7" height="1.7" fill="#151515" opacity="0.68"/><rect x="51.0" y="70.85" width="4.2" height="1.7" fill="#151515" opacity="0.68"/><rect x="56.6" y="70.85" width="4.4" height="1.7" fill="#151515" opacity="0.68"/><rect x="62.4" y="70.85" width="4.9" height="1.7" fill="#151515" opacity="0.68"/><rect x="68.7" y="70.85" width="4.9" height="1.7" fill="#151515" opacity="0.68"/><rect x="75.0" y="70.85" width="6.8" height="1.7" fill="#151515" opacity="0.68"/><defs><linearGradient id="g9" x1="0" y1="0" x2="0" y2="1"><stop offset="0" stop-color="#7b3ff0"/><stop offset="1" stop-color="#3f7ae9"/></linearGradient></defs><rect x="145" y="11.8" width="45.5" height="61.0" rx="2" fill="url(#g9)"/><rect x="147.5" y="15.8" width="27.3" height="1.1" fill="#fff" opacity=".3"/><rect x="147.5" y="19.0" width="36.4" height="1.1" fill="#fff" opacity=".3"/><rect x="147.5" y="22.2" width="36.4" height="1.1" fill="#fff" opacity=".3"/><rect x="147.5" y="25.4" width="27.3" height="1.1" fill="#fff" opacity=".3"/><rect x="147.5" y="31.799999999999997" width="36.4" height="1.1" fill="#fff" opacity=".3"/><rect x="147.5" y="35.0" width="27.3" height="1.1" fill="#fff" opacity=".3"/><rect x="147.5" y="38.2" width="36.4" height="1.1" fill="#fff" opacity=".3"/><rect x="147.5" y="41.400000000000006" width="36.4" height="1.1" fill="#fff" opacity=".3"/><rect x="147.5" y="47.80000000000001" width="36.4" height="1.1" fill="#fff" opacity=".3"/><rect x="147.5" y="51.000000000000014" width="36.4" height="1.1" fill="#fff" opacity=".3"/><rect x="147.5" y="54.20000000000002" width="27.3" height="1.1" fill="#fff" opacity=".3"/><rect x="147.5" y="57.40000000000002" width="36.4" height="1.1" fill="#fff" opacity=".3"/><rect x="147.5" y="63.800000000000026" width="27.3" height="1.1" fill="#fff" opacity=".3"/><rect x="147.5" y="67.00000000000003" width="36.4" height="1.1" fill="#fff" opacity=".3"/><rect x="165" y="79" width="22" height="1" fill="#bbb"/><rect x="158" y="88" width="10" height="1" fill="#ccc"/><rect x="177" y="84" width="6" height="16" fill="#666" opacity=".8"/><circle cx="147" cy="95" r="1.3" fill="#777"/><rect x="152" y="95" width="5" height="1" fill="#999"/><rect x="163" y="96" width="13" height="1.2" fill="#aaa"/></svg>
<div class="t " style="left:15.55px;top:168.31px;font-size:17px;color:#e8e8e8;font-weight:400;">9</div>
<svg class="r" style="left:11px;top:188.5px;" width="16" height="13" viewBox="0 0 16 13"><path d="M8.5 0.8l1.9 4 4.4.5-3.3 3 1 4.3-4-2.3-4 2.3 1-4.3-3.3-3 4.4-.5z" fill="#f0f0f0"/><rect x="1" y="3" width="2" height="1.2" fill="#ddd"/><rect x="2" y="6" width="1.5" height="1.2" fill="#ddd"/><rect x="1" y="9" width="2" height="1.2" fill="#ddd"/></svg>
<svg class="r" style="left:45px;top:315.8px;" width="208" height="118" viewBox="0 0 208 118"><rect width="208" height="118" fill="#fff"/><rect x="12.5" y="15.95" width="7.7" height="1.7" fill="#b80000" opacity="0.85"/><rect x="21.6" y="15.95" width="5.1" height="1.7" fill="#b80000" opacity="0.85"/><rect x="28.1" y="15.95" width="3.0" height="1.7" fill="#b80000" opacity="0.85"/><rect x="32.5" y="15.95" width="6.4" height="1.7" fill="#b80000" opacity="0.85"/><rect x="40.3" y="15.95" width="6.0" height="1.7" fill="#b80000" opacity="0.85"/><rect x="47.7" y="15.95" width="7.5" height="1.7" fill="#b80000" opacity="0.85"/><rect x="56.6" y="15.95" width="10.6" height="1.7" fill="#b80000" opacity="0.85"/><rect x="68.6" y="15.95" width="8.5" height="1.7" fill="#b80000" opacity="0.85"/><rect x="78.5" y="15.95" width="7.1" height="1.7" fill="#b80000" opacity="0.85"/><rect x="87.1" y="15.95" width="7.9" height="1.7" fill="#b80000" opacity="0.85"/><rect x="96.4" y="15.95" width="8.4" height="1.7" fill="#b80000" opacity="0.85"/><rect x="106.2" y="15.95" width="3.4" height="1.7" fill="#b80000" opacity="0.85"/><rect x="111.0" y="15.95" width="8.0" height="1.7" fill="#b80000" opacity="0.85"/><rect x="12.5" y="25.15" width="9.2" height="1.7" fill="#151515" opacity="0.68"/><rect x="23.1" y="25.15" width="10.0" height="1.7" fill="#151515" opacity="0.68"/><rect x="34.5" y="25.15" width="9.4" height="1.7" fill="#151515" opacity="0.68"/><rect x="45.3" y="25.15" width="6.1" height="1.7" fill="#151515" opacity="0.68"/><rect x="52.9" y="25.15" width="6.2" height="1.7" fill="#151515" opacity="0.68"/><rect x="60.4" y="25.15" width="3.8" height="1.7" fill="#151515" opacity="0.68"/><rect x="65.7" y="25.15" width="8.1" height="1.7" fill="#151515" opacity="0.68"/><rect x="75.2" y="25.15" width="3.5" height="1.7" fill="#151515" opacity="0.68"/><rect x="80.1" y="25.15" width="3.5" height="1.7" fill="#151515" opacity="0.68"/><rect x="85.0" y="25.15" width="4.7" height="1.7" fill="#151515" opacity="0.68"/><rect x="91.1" y="25.15" width="4.3" height="1.7" fill="#151515" opacity="0.68"/><rect x="96.8" y="25.15" width="5.7" height="1.7" fill="#151515" opacity="0.68"/><rect x="103.9" y="25.15" width="3.4" height="1.7" fill="#151515" opacity="0.68"/><rect x="108.7" y="25.15" width="3.0" height="1.7" fill="#151515" opacity="0.68"/><rect x="12.5" y="29.35" width="4.2" height="1.7" fill="#151515" opacity="0.68"/><rect x="18.1" y="29.35" width="3.8" height="1.7" fill="#151515" opacity="0.68"/><rect x="23.3" y="29.35" width="5.9" height="1.7" fill="#151515" opacity="0.68"/><rect x="30.6" y="29.35" width="3.2" height="1.7" fill="#151515" opacity="0.68"/><rect x="35.2" y="29.35" width="10.0" height="1.7" fill="#151515" opacity="0.68"/><rect x="46.6" y="29.35" width="7.9" height="1.7" fill="#151515" opacity="0.68"/><rect x="55.9" y="29.35" width="4.2" height="1.7" fill="#151515" opacity="0.68"/><rect x="61.5" y="29.35" width="5.0" height="1.7" fill="#151515" opacity="0.68"/><rect x="67.9" y="29.35" width="5.8" height="1.7" fill="#151515" opacity="0.68"/><rect x="75.1" y="29.35" width="5.9" height="1.7" fill="#151515" opacity="0.68"/><rect x="82.4" y="29.35" width="4.0" height="1.7" fill="#151515" opacity="0.68"/><rect x="87.8" y="29.35" width="9.8" height="1.7" fill="#151515" opacity="0.68"/><rect x="99.0" y="29.35" width="10.9" height="1.7" fill="#151515" opacity="0.68"/><rect x="111.4" y="29.35" width="1.0" height="1.7" fill="#151515" opacity="0.68"/><rect x="12.5" y="38.25" width="6.9" height="1.7" fill="#151515" opacity="0.68"/><rect x="20.8" y="38.25" width="3.7" height="1.7" fill="#151515" opacity="0.68"/><rect x="25.9" y="38.25" width="3.8" height="1.7" fill="#151515" opacity="0.68"/><rect x="31.1" y="38.25" width="5.7" height="1.7" fill="#151515" opacity="0.68"/><rect x="38.2" y="38.25" width="5.1" height="1.7" fill="#151515" opacity="0.68"/><rect x="44.7" y="38.25" width="9.6" height="1.7" fill="#151515" opacity="0.68"/><rect x="55.8" y="38.25" width="4.3" height="1.7" fill="#151515" opacity="0.68"/><rect x="61.5" y="38.25" width="3.2" height="1.7" fill="#151515" opacity="0.68"/><rect x="66.0" y="38.25" width="10.6" height="1.7" fill="#151515" opacity="0.68"/><rect x="78.0" y="38.25" width="7.2" height="1.7" fill="#151515" opacity="0.68"/><rect x="86.7" y="38.25" width="4.2" height="1.7" fill="#151515" opacity="0.68"/><rect x="92.2" y="38.25" width="7.3" height="1.7" fill="#151515" opacity="0.68"/><rect x="101.0" y="38.25" width="3.2" height="1.7" fill="#151515" opacity="0.68"/><rect x="12.5" y="42.35" width="7.2" height="1.7" fill="#151515" opacity="0.68"/><rect x="21.1" y="42.35" width="10.8" height="1.7" fill="#151515" opacity="0.68"/><rect x="33.4" y="42.35" width="9.9" height="1.7" fill="#151515" opacity="0.68"/><rect x="44.7" y="42.35" width="8.6" height="1.7" fill="#151515" opacity="0.68"/><rect x="54.6" y="42.35" width="5.1" height="1.7" fill="#151515" opacity="0.68"/><rect x="61.1" y="42.35" width="5.9" height="1.7" fill="#151515" opacity="0.68"/><rect x="68.5" y="42.35" width="4.3" height="1.7" fill="#151515" opacity="0.68"/><rect x="74.2" y="42.35" width="9.2" height="1.7" fill="#151515" opacity="0.68"/><rect x="84.8" y="42.35" width="7.3" height="1.7" fill="#151515" opacity="0.68"/><rect x="93.4" y="42.35" width="4.4" height="1.7" fill="#151515" opacity="0.68"/><rect x="12.5" y="46.55" width="5.6" height="1.7" fill="#151515" opacity="0.68"/><rect x="19.5" y="46.55" width="4.8" height="1.7" fill="#151515" opacity="0.68"/><rect x="25.7" y="46.55" width="9.5" height="1.7" fill="#151515" opacity="0.68"/><rect x="36.6" y="46.55" width="10.9" height="1.7" fill="#151515" opacity="0.68"/><rect x="48.9" y="46.55" width="9.8" height="1.7" fill="#151515" opacity="0.68"/><rect x="60.1" y="46.55" width="9.4" height="1.7" fill="#151515" opacity="0.68"/><rect x="71.0" y="46.55" width="9.3" height="1.7" fill="#151515" opacity="0.68"/><rect x="12.5" y="55.35" width="8.9" height="1.7" fill="#151515" opacity="0.68"/><rect x="22.8" y="55.35" width="4.8" height="1.7" fill="#151515" opacity="0.68"/><rect x="29.0" y="55.35" width="7.1" height="1.7" fill="#151515" opacity="0.68"/><rect x="37.6" y="55.35" width="5.8" height="1.7" fill="#151515" opacity="0.68"/><rect x="44.8" y="55.35" width="3.2" height="1.7" fill="#151515" opacity="0.68"/><rect x="49.5" y="55.35" width="3.2" height="1.7" fill="#151515" opacity="0.68"/><rect x="54.1" y="55.35" width="5.2" height="1.7" fill="#151515" opacity="0.68"/><rect x="60.7" y="55.35" width="3.6" height="1.7" fill="#151515" opacity="0.68"/><rect x="12.5" y="63.35" width="8.5" height="1.7" fill="#151515" opacity="0.68"/><rect x="22.4" y="63.35" width="10.7" height="1.7" fill="#151515" opacity="0.68"/><rect x="34.5" y="63.35" width="6.6" height="1.7" fill="#151515" opacity="0.68"/><rect x="42.5" y="63.35" width="10.5" height="1.7" fill="#151515" opacity="0.68"/><rect x="54.4" y="63.35" width="10.9" height="1.7" fill="#151515" opacity="0.68"/><rect x="66.7" y="63.35" width="10.6" height="1.7" fill="#151515" opacity="0.68"/><rect x="78.7" y="63.35" width="5.9" height="1.7" fill="#151515" opacity="0.68"/><rect x="86.0" y="63.35" width="4.8" height="1.7" fill="#151515" opacity="0.68"/><rect x="92.2" y="63.35" width="4.8" height="1.7" fill="#151515" opacity="0.68"/><rect x="98.4" y="63.35" width="4.6" height="1.7" fill="#151515" opacity="0.68"/><rect x="104.4" y="63.35" width="4.6" height="1.7" fill="#151515" opacity="0.68"/><rect x="12.5" y="68.45" width="8.0" height="1.7" fill="#151515" opacity="0.68"/><rect x="21.9" y="68.45" width="10.2" height="1.7" fill="#151515" opacity="0.68"/><rect x="33.5" y="68.45" width="9.7" height="1.7" fill="#151515" opacity="0.68"/><rect x="44.6" y="68.45" width="6.8" height="1.7" fill="#151515" opacity="0.68"/><rect x="52.9" y="68.45" width="6.3" height="1.7" fill="#151515" opacity="0.68"/><rect x="12.5" y="76.55" width="9.4" height="1.7" fill="#151515" opacity="0.68"/><rect x="23.3" y="76.55" width="3.7" height="1.7" fill="#151515" opacity="0.68"/><rect x="28.4" y="76.55" width="8.3" height="1.7" fill="#151515" opacity="0.68"/><rect x="38.1" y="76.55" width="10.3" height="1.7" fill="#151515" opacity="0.68"/><rect x="49.7" y="76.55" width="9.3" height="1.7" fill="#151515" opacity="0.68"/><rect x="60.4" y="76.55" width="9.0" height="1.7" fill="#151515" opacity="0.68"/><rect x="70.8" y="76.55" width="6.8" height="1.7" fill="#151515" opacity="0.68"/><rect x="79.0" y="76.55" width="4.4" height="1.7" fill="#151515" opacity="0.68"/><rect x="84.9" y="76.55" width="9.3" height="1.7" fill="#151515" opacity="0.68"/><rect x="95.6" y="76.55" width="5.7" height="1.7" fill="#151515" opacity="0.68"/><rect x="102.6" y="76.55" width="9.4" height="1.7" fill="#151515" opacity="0.68"/><rect x="12.5" y="81.35" width="10.8" height="1.7" fill="#151515" opacity="0.68"/><rect x="24.7" y="81.35" width="6.2" height="1.7" fill="#151515" opacity="0.68"/><rect x="32.2" y="81.35" width="6.2" height="1.7" fill="#151515" opacity="0.68"/><rect x="39.9" y="81.35" width="10.6" height="1.7" fill="#151515" opacity="0.68"/><rect x="51.8" y="81.35" width="8.8" height="1.7" fill="#151515" opacity="0.68"/><rect x="62.0" y="81.35" width="2.3" height="1.7" fill="#151515" opacity="0.68"/><rect x="12.5" y="89.65" width="4.0" height="1.7" fill="#151515" opacity="0.68"/><rect x="17.9" y="89.65" width="4.2" height="1.7" fill="#151515" opacity="0.68"/><rect x="23.5" y="89.65" width="10.2" height="1.7" fill="#151515" opacity="0.68"/><rect x="35.2" y="89.65" width="9.5" height="1.7" fill="#151515" opacity="0.68"/><rect x="46.0" y="89.65" width="4.2" height="1.7" fill="#151515" opacity="0.68"/><rect x="51.6" y="89.65" width="9.6" height="1.7" fill="#151515" opacity="0.68"/><rect x="62.6" y="89.65" width="10.8" height="1.7" fill="#151515" opacity="0.68"/><rect x="74.8" y="89.65" width="8.3" height="1.7" fill="#151515" opacity="0.68"/><rect x="84.5" y="89.65" width="5.8" height="1.7" fill="#151515" opacity="0.68"/><rect x="91.7" y="89.65" width="7.4" height="1.7" fill="#151515" opacity="0.68"/><rect x="100.5" y="89.65" width="4.0" height="1.7" fill="#151515" opacity="0.68"/><rect x="105.9" y="89.65" width="3.1" height="1.7" fill="#151515" opacity="0.68"/><rect x="110.5" y="89.65" width="7.8" height="1.7" fill="#151515" opacity="0.68"/><rect x="12.5" y="93.75" width="8.2" height="1.7" fill="#151515" opacity="0.68"/><rect x="22.1" y="93.75" width="7.2" height="1.7" fill="#151515" opacity="0.68"/><rect x="30.7" y="93.75" width="10.5" height="1.7" fill="#151515" opacity="0.68"/><rect x="42.6" y="93.75" width="6.5" height="1.7" fill="#151515" opacity="0.68"/><rect x="50.4" y="93.75" width="10.0" height="1.7" fill="#151515" opacity="0.68"/><rect x="61.8" y="93.75" width="9.6" height="1.7" fill="#151515" opacity="0.68"/><rect x="72.8" y="93.75" width="4.7" height="1.7" fill="#151515" opacity="0.68"/><rect x="78.9" y="93.75" width="5.0" height="1.7" fill="#151515" opacity="0.68"/><rect x="85.3" y="93.75" width="5.3" height="1.7" fill="#151515" opacity="0.68"/><rect x="92.1" y="93.75" width="4.9" height="1.7" fill="#151515" opacity="0.68"/><rect x="98.4" y="93.75" width="7.7" height="1.7" fill="#151515" opacity="0.68"/><rect x="107.5" y="93.75" width="2.7" height="1.7" fill="#151515" opacity="0.68"/><rect x="12.5" y="98.35" width="6.4" height="1.7" fill="#151515" opacity="0.68"/><rect x="20.3" y="98.35" width="4.0" height="1.7" fill="#151515" opacity="0.68"/><rect x="25.7" y="98.35" width="10.3" height="1.7" fill="#151515" opacity="0.68"/><rect x="37.4" y="98.35" width="5.8" height="1.7" fill="#151515" opacity="0.68"/><rect x="44.6" y="98.35" width="6.7" height="1.7" fill="#151515" opacity="0.68"/><rect x="52.7" y="98.35" width="7.7" height="1.7" fill="#151515" opacity="0.68"/><rect x="61.7" y="98.35" width="10.2" height="1.7" fill="#151515" opacity="0.68"/><rect x="73.4" y="98.35" width="6.4" height="1.7" fill="#151515" opacity="0.68"/><rect x="81.1" y="98.35" width="10.3" height="1.7" fill="#151515" opacity="0.68"/><rect x="92.9" y="98.35" width="7.0" height="1.7" fill="#151515" opacity="0.68"/><rect x="101.3" y="98.35" width="7.3" height="1.7" fill="#151515" opacity="0.68"/><rect x="110.0" y="98.35" width="3.9" height="1.7" fill="#151515" opacity="0.68"/><circle cx="133" cy="15.5" r="2" fill="#333"/><rect x="138.5" y="13.8" width="42" height="3.2" rx="1.5" fill="#e6e6e6"/><defs><linearGradient id="g10" x1="0" y1="0" x2="0" y2="1"><stop offset="0" stop-color="#7b3ff0"/><stop offset="1" stop-color="#3f7ae9"/></linearGradient></defs><rect x="143.5" y="19.7" width="47.69999999999999" height="86.5" rx="2" fill="url(#g10)"/><rect x="146.0" y="23.7" width="28.619999999999994" height="1.1" fill="#fff" opacity=".3"/><rect x="146.0" y="26.9" width="38.15999999999999" height="1.1" fill="#fff" opacity=".3"/><rect x="146.0" y="30.099999999999998" width="38.15999999999999" height="1.1" fill="#fff" opacity=".3"/><rect x="146.0" y="33.3" width="28.619999999999994" height="1.1" fill="#fff" opacity=".3"/><rect x="146.0" y="39.7" width="38.15999999999999" height="1.1" fill="#fff" opacity=".3"/><rect x="146.0" y="42.900000000000006" width="28.619999999999994" height="1.1" fill="#fff" opacity=".3"/><rect x="146.0" y="46.10000000000001" width="38.15999999999999" height="1.1" fill="#fff" opacity=".3"/><rect x="146.0" y="49.30000000000001" width="38.15999999999999" height="1.1" fill="#fff" opacity=".3"/><rect x="146.0" y="55.70000000000002" width="38.15999999999999" height="1.1" fill="#fff" opacity=".3"/><rect x="146.0" y="58.90000000000002" width="38.15999999999999" height="1.1" fill="#fff" opacity=".3"/><rect x="146.0" y="62.10000000000002" width="28.619999999999994" height="1.1" fill="#fff" opacity=".3"/><rect x="146.0" y="65.30000000000003" width="38.15999999999999" height="1.1" fill="#fff" opacity=".3"/><rect x="146.0" y="71.70000000000003" width="28.619999999999994" height="1.1" fill="#fff" opacity=".3"/><rect x="146.0" y="74.90000000000003" width="38.15999999999999" height="1.1" fill="#fff" opacity=".3"/><rect x="146.0" y="78.10000000000004" width="38.15999999999999" height="1.1" fill="#fff" opacity=".3"/><rect x="146.0" y="81.30000000000004" width="28.619999999999994" height="1.1" fill="#fff" opacity=".3"/><rect x="146.0" y="87.70000000000005" width="38.15999999999999" height="1.1" fill="#fff" opacity=".3"/><rect x="146.0" y="90.90000000000005" width="28.619999999999994" height="1.1" fill="#fff" opacity=".3"/><rect x="146.0" y="94.10000000000005" width="38.15999999999999" height="1.1" fill="#fff" opacity=".3"/><rect x="146.0" y="97.30000000000005" width="38.15999999999999" height="1.1" fill="#fff" opacity=".3"/></svg>
<div class="t " style="left:6.100000000000001px;top:313.11px;font-size:17px;color:#e8e8e8;font-weight:400;">10</div>
<svg class="r" style="left:11px;top:333.3px;" width="16" height="13" viewBox="0 0 16 13"><path d="M8.5 0.8l1.9 4 4.4.5-3.3 3 1 4.3-4-2.3-4 2.3 1-4.3-3.3-3 4.4-.5z" fill="#f0f0f0"/><rect x="1" y="3" width="2" height="1.2" fill="#ddd"/><rect x="2" y="6" width="1.5" height="1.2" fill="#ddd"/><rect x="1" y="9" width="2" height="1.2" fill="#ddd"/></svg>
<svg class="r" style="left:45px;top:459.5px;" width="208" height="118" viewBox="0 0 208 118"><rect width="208" height="118" fill="#fff"/><rect x="15.0" y="84.35" width="3.1" height="1.7" fill="#b80000" opacity="0.85"/><rect x="19.5" y="84.35" width="6.5" height="1.7" fill="#b80000" opacity="0.85"/><rect x="27.5" y="84.35" width="4.5" height="1.7" fill="#b80000" opacity="0.85"/><rect x="33.3" y="84.35" width="3.0" height="1.7" fill="#b80000" opacity="0.85"/><rect x="37.8" y="84.35" width="9.4" height="1.7" fill="#b80000" opacity="0.85"/><rect x="48.6" y="84.35" width="4.4" height="1.7" fill="#b80000" opacity="0.85"/><rect x="54.3" y="84.35" width="6.8" height="1.7" fill="#b80000" opacity="0.85"/><rect x="62.5" y="84.35" width="8.8" height="1.7" fill="#b80000" opacity="0.85"/><rect x="72.7" y="84.35" width="3.3" height="1.7" fill="#b80000" opacity="0.85"/><rect x="15.0" y="32.85" width="5.6" height="1.7" fill="#151515" opacity="0.68"/><rect x="22.0" y="32.85" width="7.1" height="1.7" fill="#151515" opacity="0.68"/><rect x="30.6" y="32.85" width="7.4" height="1.7" fill="#151515" opacity="0.68"/><rect x="39.4" y="32.85" width="9.3" height="1.7" fill="#151515" opacity="0.68"/><rect x="50.1" y="32.85" width="3.8" height="1.7" fill="#151515" opacity="0.68"/><rect x="55.3" y="32.85" width="7.5" height="1.7" fill="#151515" opacity="0.68"/><rect x="64.2" y="32.85" width="5.0" height="1.7" fill="#151515" opacity="0.68"/><rect x="70.6" y="32.85" width="5.2" height="1.7" fill="#151515" opacity="0.68"/><rect x="77.2" y="32.85" width="9.2" height="1.7" fill="#151515" opacity="0.68"/><rect x="87.8" y="32.85" width="7.1" height="1.7" fill="#151515" opacity="0.68"/><rect x="96.2" y="32.85" width="7.5" height="1.7" fill="#151515" opacity="0.68"/><rect x="105.1" y="32.85" width="6.6" height="1.7" fill="#151515" opacity="0.68"/><rect x="15.0" y="37.65" width="10.3" height="1.7" fill="#151515" opacity="0.68"/><rect x="26.7" y="37.65" width="6.5" height="1.7" fill="#151515" opacity="0.68"/><rect x="34.6" y="37.65" width="7.9" height="1.7" fill="#151515" opacity="0.68"/><rect x="43.9" y="37.65" width="7.0" height="1.7" fill="#151515" opacity="0.68"/><rect x="52.4" y="37.65" width="7.1" height="1.7" fill="#151515" opacity="0.68"/><rect x="60.9" y="37.65" width="8.5" height="1.7" fill="#151515" opacity="0.68"/><rect x="70.8" y="37.65" width="6.6" height="1.7" fill="#151515" opacity="0.68"/><rect x="78.8" y="37.65" width="7.3" height="1.7" fill="#151515" opacity="0.68"/><rect x="87.5" y="37.65" width="6.8" height="1.7" fill="#151515" opacity="0.68"/><rect x="95.7" y="37.65" width="4.3" height="1.7" fill="#151515" opacity="0.68"/><rect x="15.0" y="41.65" width="8.6" height="1.7" fill="#151515" opacity="0.68"/><rect x="25.0" y="41.65" width="10.0" height="1.7" fill="#151515" opacity="0.68"/><rect x="36.4" y="41.65" width="4.6" height="1.7" fill="#151515" opacity="0.68"/><rect x="15.0" y="50.55" width="5.1" height="1.7" fill="#151515" opacity="0.68"/><rect x="21.5" y="50.55" width="7.5" height="1.7" fill="#151515" opacity="0.68"/><rect x="30.4" y="50.55" width="10.5" height="1.7" fill="#151515" opacity="0.68"/><rect x="42.3" y="50.55" width="9.7" height="1.7" fill="#151515" opacity="0.68"/><rect x="53.4" y="50.55" width="4.1" height="1.7" fill="#151515" opacity="0.68"/><rect x="58.9" y="50.55" width="4.0" height="1.7" fill="#151515" opacity="0.68"/><rect x="64.3" y="50.55" width="6.5" height="1.7" fill="#151515" opacity="0.68"/><rect x="72.2" y="50.55" width="3.6" height="1.7" fill="#151515" opacity="0.68"/><rect x="77.2" y="50.55" width="4.9" height="1.7" fill="#151515" opacity="0.68"/><rect x="83.5" y="50.55" width="3.6" height="1.7" fill="#151515" opacity="0.68"/><rect x="88.5" y="50.55" width="8.4" height="1.7" fill="#151515" opacity="0.68"/><rect x="98.3" y="50.55" width="9.3" height="1.7" fill="#151515" opacity="0.68"/><rect x="108.9" y="50.55" width="6.5" height="1.7" fill="#151515" opacity="0.68"/><rect x="15.0" y="67.55" width="4.2" height="1.7" fill="#151515" opacity="0.68"/><rect x="20.6" y="67.55" width="8.7" height="1.7" fill="#151515" opacity="0.68"/><rect x="30.8" y="67.55" width="8.3" height="1.7" fill="#151515" opacity="0.68"/><rect x="40.4" y="67.55" width="4.1" height="1.7" fill="#151515" opacity="0.68"/><rect x="46.0" y="67.55" width="10.1" height="1.7" fill="#151515" opacity="0.68"/><rect x="57.5" y="67.55" width="10.7" height="1.7" fill="#151515" opacity="0.68"/><rect x="69.6" y="67.55" width="4.8" height="1.7" fill="#151515" opacity="0.68"/><rect x="75.8" y="67.55" width="10.6" height="1.7" fill="#151515" opacity="0.68"/><rect x="87.8" y="67.55" width="6.2" height="1.7" fill="#151515" opacity="0.68"/><rect x="95.4" y="67.55" width="6.9" height="1.7" fill="#151515" opacity="0.68"/><rect x="103.7" y="67.55" width="10.9" height="1.7" fill="#151515" opacity="0.68"/><rect x="15.0" y="71.65" width="9.7" height="1.7" fill="#151515" opacity="0.68"/><rect x="26.1" y="71.65" width="4.3" height="1.7" fill="#151515" opacity="0.68"/><rect x="31.8" y="71.65" width="6.5" height="1.7" fill="#151515" opacity="0.68"/><rect x="39.6" y="71.65" width="7.1" height="1.7" fill="#151515" opacity="0.68"/><rect x="48.1" y="71.65" width="5.7" height="1.7" fill="#151515" opacity="0.68"/><rect x="55.2" y="71.65" width="4.6" height="1.7" fill="#151515" opacity="0.68"/><rect x="61.2" y="71.65" width="5.5" height="1.7" fill="#151515" opacity="0.68"/><rect x="68.2" y="71.65" width="8.8" height="1.7" fill="#151515" opacity="0.68"/><rect x="78.3" y="71.65" width="3.2" height="1.7" fill="#151515" opacity="0.68"/><rect x="82.9" y="71.65" width="7.4" height="1.7" fill="#151515" opacity="0.68"/><rect x="91.7" y="71.65" width="6.5" height="1.7" fill="#151515" opacity="0.68"/><rect x="99.6" y="71.65" width="3.1" height="1.7" fill="#151515" opacity="0.68"/><rect x="104.2" y="71.65" width="5.7" height="1.7" fill="#151515" opacity="0.68"/><rect x="15.0" y="75.65" width="8.0" height="1.7" fill="#151515" opacity="0.68"/><rect x="24.4" y="75.65" width="7.1" height="1.7" fill="#151515" opacity="0.68"/><rect x="32.9" y="75.65" width="3.5" height="1.7" fill="#151515" opacity="0.68"/><rect x="37.8" y="75.65" width="10.9" height="1.7" fill="#151515" opacity="0.68"/><rect x="50.1" y="75.65" width="9.3" height="1.7" fill="#151515" opacity="0.68"/><rect x="60.8" y="75.65" width="10.8" height="1.7" fill="#151515" opacity="0.68"/><rect x="73.0" y="75.65" width="1.5" height="1.7" fill="#151515" opacity="0.68"/><rect x="15.0" y="88.35" width="5.1" height="1.7" fill="#151515" opacity="0.68"/><rect x="21.5" y="88.35" width="3.3" height="1.7" fill="#151515" opacity="0.68"/><rect x="26.2" y="88.35" width="9.2" height="1.7" fill="#151515" opacity="0.68"/><rect x="36.9" y="88.35" width="5.2" height="1.7" fill="#151515" opacity="0.68"/><rect x="43.4" y="88.35" width="4.0" height="1.7" fill="#151515" opacity="0.68"/><rect x="48.9" y="88.35" width="6.4" height="1.7" fill="#151515" opacity="0.68"/><rect x="56.7" y="88.35" width="10.3" height="1.7" fill="#151515" opacity="0.68"/><rect x="68.3" y="88.35" width="9.6" height="1.7" fill="#151515" opacity="0.68"/><rect x="79.3" y="88.35" width="5.1" height="1.7" fill="#151515" opacity="0.68"/><rect x="85.8" y="88.35" width="4.2" height="1.7" fill="#151515" opacity="0.68"/><rect x="91.4" y="88.35" width="10.4" height="1.7" fill="#151515" opacity="0.68"/><rect x="103.1" y="88.35" width="7.6" height="1.7" fill="#151515" opacity="0.68"/><rect x="112.1" y="88.35" width="8.6" height="1.7" fill="#151515" opacity="0.68"/><rect x="15.0" y="92.65" width="3.7" height="1.7" fill="#151515" opacity="0.68"/><rect x="20.1" y="92.65" width="3.5" height="1.7" fill="#151515" opacity="0.68"/><rect x="25.0" y="92.65" width="8.5" height="1.7" fill="#151515" opacity="0.68"/><rect x="34.9" y="92.65" width="6.4" height="1.7" fill="#151515" opacity="0.68"/><rect x="42.7" y="92.65" width="3.6" height="1.7" fill="#151515" opacity="0.68"/><rect x="47.7" y="92.65" width="10.5" height="1.7" fill="#151515" opacity="0.68"/><rect x="59.6" y="92.65" width="8.1" height="1.7" fill="#151515" opacity="0.68"/><rect x="69.0" y="92.65" width="9.4" height="1.7" fill="#151515" opacity="0.68"/><rect x="79.9" y="92.65" width="3.7" height="1.7" fill="#151515" opacity="0.68"/><rect x="84.9" y="92.65" width="9.8" height="1.7" fill="#151515" opacity="0.68"/><rect x="96.2" y="92.65" width="3.5" height="1.7" fill="#151515" opacity="0.68"/><rect x="101.1" y="92.65" width="9.9" height="1.7" fill="#151515" opacity="0.68"/><g opacity=".55"><rect x="170" y="15" width="14" height="1.2" fill="#888"/><rect x="170" y="18" width="18" height="1.2" fill="#888"/><rect x="171" y="23" width="10" height="1.2" fill="#777"/><rect x="170" y="29" width="24" height="1" fill="#aaa"/><rect x="170" y="32" width="20" height="1" fill="#aaa"/><rect x="170" y="37" width="22" height="1" fill="#aaa"/><rect x="170" y="42" width="24" height="1" fill="#aaa"/><rect x="170" y="47" width="12" height="1" fill="#aaa"/><rect x="172" y="51" width="8" height="3" fill="#777"/></g><circle cx="163" cy="38" r="1.4" fill="#888"/><rect x="149.6" y="57.5" width="46" height="37.2" rx="2.5" fill="#4d5cf0"/><rect x="152" y="60.0" width="20" height="1.2" fill="#fff" opacity=".5"/><rect x="152" y="63.3" width="20" height="1.2" fill="#fff" opacity=".5"/><rect x="152" y="66.6" width="20" height="1.2" fill="#fff" opacity=".5"/><rect x="152" y="69.9" width="20" height="1.2" fill="#fff" opacity=".5"/><rect x="152" y="73.2" width="20" height="1.2" fill="#fff" opacity=".5"/><rect x="152" y="79.8" width="36" height="1.2" fill="#fff" opacity=".5"/><rect x="152" y="83.1" width="36" height="1.2" fill="#fff" opacity=".5"/><rect x="152" y="86.4" width="36" height="1.2" fill="#fff" opacity=".5"/><rect x="152" y="89.7" width="36" height="1.2" fill="#fff" opacity=".5"/><rect x="144.5" y="102" width="43.5" height="6" rx="1.5" fill="#ececec"/><rect x="146" y="103.2" width="36" height="1.2" fill="#888"/><circle cx="138.7" cy="107.5" r="1.8" fill="#333"/></svg>
<div class="t " style="left:6.100000000000001px;top:456.81px;font-size:17px;color:#e8e8e8;font-weight:400;">11</div>
<svg class="r" style="left:11px;top:477.0px;" width="16" height="13" viewBox="0 0 16 13"><path d="M8.5 0.8l1.9 4 4.4.5-3.3 3 1 4.3-4-2.3-4 2.3 1-4.3-3.3-3 4.4-.5z" fill="#f0f0f0"/><rect x="1" y="3" width="2" height="1.2" fill="#ddd"/><rect x="2" y="6" width="1.5" height="1.2" fill="#ddd"/><rect x="1" y="9" width="2" height="1.2" fill="#ddd"/></svg>
<div class="r" style="left:41px;top:600.3000000000001px;width:216px;height:124.7px;background:#f2b6a4;"></div>
<div class="r" style="left:44px;top:603.1px;width:210px;height:119.2px;background:#1a1a1a;"></div>
<svg class="r" style="left:45px;top:603.7px;" width="208" height="118" viewBox="0 0 208 118"><rect width="208" height="118" fill="#fff"/><rect x="13.2" y="16.95" width="6.6" height="1.7" fill="#b80000" opacity="0.85"/><rect x="21.2" y="16.95" width="5.7" height="1.7" fill="#b80000" opacity="0.85"/><rect x="28.3" y="16.95" width="7.4" height="1.7" fill="#b80000" opacity="0.85"/><rect x="37.2" y="16.95" width="10.4" height="1.7" fill="#b80000" opacity="0.85"/><rect x="49.0" y="16.95" width="5.1" height="1.7" fill="#b80000" opacity="0.85"/><rect x="55.5" y="16.95" width="4.0" height="1.7" fill="#b80000" opacity="0.85"/><rect x="61.0" y="16.95" width="7.2" height="1.7" fill="#b80000" opacity="0.85"/><rect x="13.2" y="21.15" width="4.9" height="1.7" fill="#b80000" opacity="0.85"/><rect x="19.5" y="21.15" width="3.9" height="1.7" fill="#b80000" opacity="0.85"/><rect x="24.8" y="21.15" width="4.3" height="1.7" fill="#b80000" opacity="0.85"/><rect x="30.5" y="21.15" width="3.4" height="1.7" fill="#b80000" opacity="0.85"/><rect x="35.3" y="21.15" width="4.6" height="1.7" fill="#b80000" opacity="0.85"/><rect x="41.3" y="21.15" width="5.5" height="1.7" fill="#b80000" opacity="0.85"/><rect x="48.2" y="21.15" width="5.4" height="1.7" fill="#b80000" opacity="0.85"/><rect x="55.0" y="21.15" width="9.1" height="1.7" fill="#b80000" opacity="0.85"/><rect x="65.5" y="21.15" width="5.3" height="1.7" fill="#b80000" opacity="0.85"/><rect x="72.2" y="21.15" width="7.0" height="1.7" fill="#b80000" opacity="0.85"/><rect x="80.6" y="21.15" width="4.4" height="1.7" fill="#b80000" opacity="0.85"/><rect x="86.4" y="21.15" width="5.8" height="1.7" fill="#b80000" opacity="0.85"/><rect x="93.6" y="21.15" width="3.1" height="1.7" fill="#b80000" opacity="0.85"/><rect x="98.2" y="21.15" width="5.0" height="1.7" fill="#b80000" opacity="0.85"/><rect x="104.6" y="21.15" width="3.1" height="1.7" fill="#b80000" opacity="0.85"/><rect x="109.1" y="21.15" width="2.4" height="1.7" fill="#b80000" opacity="0.85"/><rect x="13.2" y="25.45" width="7.4" height="1.7" fill="#b80000" opacity="0.85"/><rect x="22.0" y="25.45" width="4.5" height="1.7" fill="#b80000" opacity="0.85"/><rect x="27.9" y="25.45" width="6.8" height="1.7" fill="#b80000" opacity="0.85"/><rect x="36.1" y="25.45" width="10.5" height="1.7" fill="#b80000" opacity="0.85"/><rect x="48.0" y="25.45" width="3.9" height="1.7" fill="#b80000" opacity="0.85"/><rect x="53.2" y="25.45" width="9.6" height="1.7" fill="#b80000" opacity="0.85"/><rect x="64.2" y="25.45" width="6.5" height="1.7" fill="#b80000" opacity="0.85"/><rect x="72.1" y="25.45" width="7.0" height="1.7" fill="#b80000" opacity="0.85"/><rect x="80.4" y="25.45" width="9.7" height="1.7" fill="#b80000" opacity="0.85"/><rect x="91.5" y="25.45" width="6.1" height="1.7" fill="#b80000" opacity="0.85"/><rect x="13.2" y="29.95" width="7.1" height="1.7" fill="#b80000" opacity="0.85"/><rect x="21.7" y="29.95" width="3.9" height="1.7" fill="#b80000" opacity="0.85"/><rect x="13.2" y="39.35" width="10.9" height="1.7" fill="#151515" opacity="0.68"/><rect x="25.5" y="39.35" width="5.7" height="1.7" fill="#151515" opacity="0.68"/><rect x="32.6" y="39.35" width="9.7" height="1.7" fill="#151515" opacity="0.68"/><rect x="43.7" y="39.35" width="8.7" height="1.7" fill="#151515" opacity="0.68"/><rect x="53.7" y="39.35" width="8.1" height="1.7" fill="#151515" opacity="0.68"/><rect x="63.2" y="39.35" width="6.2" height="1.7" fill="#151515" opacity="0.68"/><rect x="70.8" y="39.35" width="5.8" height="1.7" fill="#151515" opacity="0.68"/><rect x="78.0" y="39.35" width="3.4" height="1.7" fill="#151515" opacity="0.68"/><rect x="82.9" y="39.35" width="4.0" height="1.7" fill="#151515" opacity="0.68"/><rect x="13.2" y="43.65" width="3.6" height="1.7" fill="#151515" opacity="0.68"/><rect x="18.2" y="43.65" width="8.9" height="1.7" fill="#151515" opacity="0.68"/><rect x="28.5" y="43.65" width="5.0" height="1.7" fill="#151515" opacity="0.68"/><rect x="34.9" y="43.65" width="4.3" height="1.7" fill="#151515" opacity="0.68"/><rect x="40.6" y="43.65" width="3.7" height="1.7" fill="#151515" opacity="0.68"/><rect x="45.7" y="43.65" width="9.7" height="1.7" fill="#151515" opacity="0.68"/><rect x="56.8" y="43.65" width="10.0" height="1.7" fill="#151515" opacity="0.68"/><rect x="68.2" y="43.65" width="8.4" height="1.7" fill="#151515" opacity="0.68"/><rect x="78.0" y="43.65" width="5.3" height="1.7" fill="#151515" opacity="0.68"/><rect x="84.6" y="43.65" width="4.9" height="1.7" fill="#151515" opacity="0.68"/><rect x="91.0" y="43.65" width="5.3" height="1.7" fill="#151515" opacity="0.68"/><rect x="97.7" y="43.65" width="6.7" height="1.7" fill="#151515" opacity="0.68"/><rect x="105.8" y="43.65" width="2.9" height="1.7" fill="#151515" opacity="0.68"/><rect x="13.2" y="47.85" width="6.6" height="1.7" fill="#151515" opacity="0.68"/><rect x="21.2" y="47.85" width="5.1" height="1.7" fill="#151515" opacity="0.68"/><rect x="27.7" y="47.85" width="10.7" height="1.7" fill="#151515" opacity="0.68"/><rect x="39.8" y="47.85" width="10.8" height="1.7" fill="#151515" opacity="0.68"/><rect x="51.9" y="47.85" width="7.4" height="1.7" fill="#151515" opacity="0.68"/><rect x="60.7" y="47.85" width="5.0" height="1.7" fill="#151515" opacity="0.68"/><rect x="67.1" y="47.85" width="10.7" height="1.7" fill="#151515" opacity="0.68"/><rect x="79.2" y="47.85" width="5.5" height="1.7" fill="#151515" opacity="0.68"/><rect x="86.1" y="47.85" width="5.9" height="1.7" fill="#151515" opacity="0.68"/><rect x="93.3" y="47.85" width="3.0" height="1.7" fill="#151515" opacity="0.68"/><rect x="97.7" y="47.85" width="6.1" height="1.7" fill="#151515" opacity="0.68"/><rect x="13.2" y="52.55" width="6.8" height="1.7" fill="#151515" opacity="0.68"/><rect x="21.4" y="52.55" width="4.2" height="1.7" fill="#151515" opacity="0.68"/><rect x="13.2" y="61.35" width="4.6" height="1.7" fill="#151515" opacity="0.68"/><rect x="19.2" y="61.35" width="7.0" height="1.7" fill="#151515" opacity="0.68"/><rect x="27.6" y="61.35" width="3.0" height="1.7" fill="#151515" opacity="0.68"/><rect x="32.1" y="61.35" width="5.1" height="1.7" fill="#151515" opacity="0.68"/><rect x="38.6" y="61.35" width="3.7" height="1.7" fill="#151515" opacity="0.68"/><rect x="43.7" y="61.35" width="6.2" height="1.7" fill="#151515" opacity="0.68"/><rect x="51.3" y="61.35" width="3.3" height="1.7" fill="#151515" opacity="0.68"/><rect x="56.0" y="61.35" width="3.2" height="1.7" fill="#151515" opacity="0.68"/><rect x="60.6" y="61.35" width="5.4" height="1.7" fill="#151515" opacity="0.68"/><rect x="67.5" y="61.35" width="4.9" height="1.7" fill="#151515" opacity="0.68"/><rect x="73.7" y="61.35" width="7.7" height="1.7" fill="#151515" opacity="0.68"/><rect x="82.8" y="61.35" width="7.2" height="1.7" fill="#151515" opacity="0.68"/><rect x="91.4" y="61.35" width="6.7" height="1.7" fill="#151515" opacity="0.68"/><rect x="13.2" y="65.65" width="8.3" height="1.7" fill="#151515" opacity="0.68"/><rect x="22.9" y="65.65" width="8.7" height="1.7" fill="#151515" opacity="0.68"/><rect x="33.0" y="65.65" width="10.0" height="1.7" fill="#151515" opacity="0.68"/><rect x="44.4" y="65.65" width="6.1" height="1.7" fill="#151515" opacity="0.68"/><rect x="51.9" y="65.65" width="5.6" height="1.7" fill="#151515" opacity="0.68"/><rect x="58.9" y="65.65" width="10.9" height="1.7" fill="#151515" opacity="0.68"/><rect x="71.2" y="65.65" width="4.2" height="1.7" fill="#151515" opacity="0.68"/><rect x="76.8" y="65.65" width="8.8" height="1.7" fill="#151515" opacity="0.68"/><rect x="87.0" y="65.65" width="8.1" height="1.7" fill="#151515" opacity="0.68"/><rect x="96.6" y="65.65" width="3.4" height="1.7" fill="#151515" opacity="0.68"/><rect x="101.3" y="65.65" width="9.2" height="1.7" fill="#151515" opacity="0.68"/><rect x="13.2" y="70.25" width="10.1" height="1.7" fill="#151515" opacity="0.68"/><rect x="24.7" y="70.25" width="8.0" height="1.7" fill="#151515" opacity="0.68"/><rect x="34.2" y="70.25" width="8.9" height="1.7" fill="#151515" opacity="0.68"/><rect x="44.4" y="70.25" width="9.5" height="1.7" fill="#151515" opacity="0.68"/><rect x="55.3" y="70.25" width="4.1" height="1.7" fill="#151515" opacity="0.68"/><rect x="60.8" y="70.25" width="7.2" height="1.7" fill="#151515" opacity="0.68"/><rect x="69.4" y="70.25" width="7.0" height="1.7" fill="#151515" opacity="0.68"/><rect x="77.9" y="70.25" width="9.7" height="1.7" fill="#151515" opacity="0.68"/><rect x="88.9" y="70.25" width="9.4" height="1.7" fill="#151515" opacity="0.68"/><rect x="99.8" y="70.25" width="6.8" height="1.7" fill="#151515" opacity="0.68"/><rect x="13.2" y="74.55" width="7.7" height="1.7" fill="#151515" opacity="0.68"/><rect x="22.3" y="74.55" width="10.1" height="1.7" fill="#151515" opacity="0.68"/><rect x="33.8" y="74.55" width="8.5" height="1.7" fill="#151515" opacity="0.68"/><rect x="43.7" y="74.55" width="8.5" height="1.7" fill="#151515" opacity="0.68"/><rect x="53.6" y="74.55" width="4.8" height="1.7" fill="#151515" opacity="0.68"/><rect x="59.9" y="74.55" width="3.2" height="1.7" fill="#151515" opacity="0.68"/><rect x="64.5" y="74.55" width="4.1" height="1.7" fill="#151515" opacity="0.68"/><rect x="70.0" y="74.55" width="5.9" height="1.7" fill="#151515" opacity="0.68"/><rect x="77.3" y="74.55" width="3.8" height="1.7" fill="#151515" opacity="0.68"/><rect x="82.5" y="74.55" width="9.7" height="1.7" fill="#151515" opacity="0.68"/><rect x="93.6" y="74.55" width="7.5" height="1.7" fill="#151515" opacity="0.68"/><rect x="102.5" y="74.55" width="7.3" height="1.7" fill="#151515" opacity="0.68"/><rect x="13.2" y="78.75" width="8.0" height="1.7" fill="#151515" opacity="0.68"/><rect x="22.6" y="78.75" width="8.4" height="1.7" fill="#151515" opacity="0.68"/><rect x="32.5" y="78.75" width="6.9" height="1.7" fill="#151515" opacity="0.68"/><rect x="40.8" y="78.75" width="3.0" height="1.7" fill="#151515" opacity="0.68"/><rect x="45.2" y="78.75" width="9.4" height="1.7" fill="#151515" opacity="0.68"/><rect x="56.0" y="78.75" width="9.0" height="1.7" fill="#151515" opacity="0.68"/><rect x="66.4" y="78.75" width="7.0" height="1.7" fill="#151515" opacity="0.68"/><rect x="74.8" y="78.75" width="7.3" height="1.7" fill="#151515" opacity="0.68"/><rect x="83.5" y="78.75" width="8.3" height="1.7" fill="#151515" opacity="0.68"/><rect x="93.1" y="78.75" width="3.5" height="1.7" fill="#151515" opacity="0.68"/><rect x="98.1" y="78.75" width="7.5" height="1.7" fill="#151515" opacity="0.68"/><rect x="13.2" y="83.05" width="5.0" height="1.7" fill="#151515" opacity="0.68"/><rect x="19.6" y="83.05" width="3.6" height="1.7" fill="#151515" opacity="0.68"/><rect x="24.6" y="83.05" width="5.1" height="1.7" fill="#151515" opacity="0.68"/><rect x="31.1" y="83.05" width="8.8" height="1.7" fill="#151515" opacity="0.68"/><rect x="41.4" y="83.05" width="4.6" height="1.7" fill="#151515" opacity="0.68"/><rect x="47.4" y="83.05" width="1.6" height="1.7" fill="#151515" opacity="0.68"/><rect x="13.2" y="91.15" width="10.8" height="1.7" fill="#151515" opacity="0.68"/><rect x="25.4" y="91.15" width="7.0" height="1.7" fill="#151515" opacity="0.68"/><rect x="33.8" y="91.15" width="6.1" height="1.7" fill="#151515" opacity="0.68"/><rect x="41.2" y="91.15" width="6.8" height="1.7" fill="#151515" opacity="0.68"/><rect x="49.5" y="91.15" width="8.5" height="1.7" fill="#151515" opacity="0.68"/><rect x="59.3" y="91.15" width="9.1" height="1.7" fill="#151515" opacity="0.68"/><rect x="69.9" y="91.15" width="7.9" height="1.7" fill="#151515" opacity="0.68"/><rect x="79.2" y="91.15" width="8.1" height="1.7" fill="#151515" opacity="0.68"/><rect x="88.7" y="91.15" width="3.6" height="1.7" fill="#151515" opacity="0.68"/><rect x="93.8" y="91.15" width="4.2" height="1.7" fill="#151515" opacity="0.68"/><rect x="99.3" y="91.15" width="2.6" height="1.7" fill="#151515" opacity="0.68"/><rect x="13.2" y="95.35" width="8.9" height="1.7" fill="#151515" opacity="0.68"/><rect x="23.5" y="95.35" width="5.4" height="1.7" fill="#151515" opacity="0.68"/><rect x="30.4" y="95.35" width="7.5" height="1.7" fill="#151515" opacity="0.68"/><rect x="39.3" y="95.35" width="3.1" height="1.7" fill="#151515" opacity="0.68"/><rect x="43.8" y="95.35" width="3.5" height="1.7" fill="#151515" opacity="0.68"/><rect x="48.7" y="95.35" width="5.2" height="1.7" fill="#151515" opacity="0.68"/><rect x="55.3" y="95.35" width="8.4" height="1.7" fill="#151515" opacity="0.68"/><rect x="65.0" y="95.35" width="8.5" height="1.7" fill="#151515" opacity="0.68"/><rect x="75.0" y="95.35" width="8.4" height="1.7" fill="#151515" opacity="0.68"/><rect x="84.8" y="95.35" width="5.3" height="1.7" fill="#151515" opacity="0.68"/><rect x="91.5" y="95.35" width="7.1" height="1.7" fill="#151515" opacity="0.68"/><rect x="100.0" y="95.35" width="6.7" height="1.7" fill="#151515" opacity="0.68"/><circle cx="146.7" cy="35.6" r="1.2" fill="#999"/><defs><linearGradient id="g12" x1="0" y1="0" x2="0" y2="1"><stop offset="0" stop-color="#7b3ff0"/><stop offset="1" stop-color="#3f7ae9"/></linearGradient></defs><rect x="151" y="13.6" width="44.80000000000001" height="92.4" rx="2" fill="url(#g12)"/><rect x="153.5" y="17.6" width="26.880000000000006" height="1.1" fill="#fff" opacity=".3"/><rect x="153.5" y="20.8" width="35.84000000000001" height="1.1" fill="#fff" opacity=".3"/><rect x="153.5" y="24.0" width="35.84000000000001" height="1.1" fill="#fff" opacity=".3"/><rect x="153.5" y="27.2" width="26.880000000000006" height="1.1" fill="#fff" opacity=".3"/><rect x="153.5" y="33.6" width="35.84000000000001" height="1.1" fill="#fff" opacity=".3"/><rect x="153.5" y="36.800000000000004" width="26.880000000000006" height="1.1" fill="#fff" opacity=".3"/><rect x="153.5" y="40.00000000000001" width="35.84000000000001" height="1.1" fill="#fff" opacity=".3"/><rect x="153.5" y="43.20000000000001" width="35.84000000000001" height="1.1" fill="#fff" opacity=".3"/><rect x="153.5" y="49.600000000000016" width="35.84000000000001" height="1.1" fill="#fff" opacity=".3"/><rect x="153.5" y="52.80000000000002" width="35.84000000000001" height="1.1" fill="#fff" opacity=".3"/><rect x="153.5" y="56.00000000000002" width="26.880000000000006" height="1.1" fill="#fff" opacity=".3"/><rect x="153.5" y="59.200000000000024" width="35.84000000000001" height="1.1" fill="#fff" opacity=".3"/><rect x="153.5" y="65.60000000000002" width="26.880000000000006" height="1.1" fill="#fff" opacity=".3"/><rect x="153.5" y="68.80000000000003" width="35.84000000000001" height="1.1" fill="#fff" opacity=".3"/><rect x="153.5" y="72.00000000000003" width="35.84000000000001" height="1.1" fill="#fff" opacity=".3"/><rect x="153.5" y="75.20000000000003" width="26.880000000000006" height="1.1" fill="#fff" opacity=".3"/><rect x="153.5" y="81.60000000000004" width="35.84000000000001" height="1.1" fill="#fff" opacity=".3"/><rect x="153.5" y="84.80000000000004" width="26.880000000000006" height="1.1" fill="#fff" opacity=".3"/><rect x="153.5" y="88.00000000000004" width="35.84000000000001" height="1.1" fill="#fff" opacity=".3"/><rect x="153.5" y="91.20000000000005" width="35.84000000000001" height="1.1" fill="#fff" opacity=".3"/><rect x="153.5" y="97.60000000000005" width="35.84000000000001" height="1.1" fill="#fff" opacity=".3"/><rect x="153.5" y="100.80000000000005" width="35.84000000000001" height="1.1" fill="#fff" opacity=".3"/></svg>
<div class="t " style="left:6.100000000000001px;top:601.01px;font-size:17px;color:#e8e8e8;font-weight:400;">12</div>
<svg class="r" style="left:11px;top:621.2px;" width="16" height="13" viewBox="0 0 16 13"><path d="M8.5 0.8l1.9 4 4.4.5-3.3 3 1 4.3-4-2.3-4 2.3 1-4.3-3.3-3 4.4-.5z" fill="#f0f0f0"/><rect x="1" y="3" width="2" height="1.2" fill="#ddd"/><rect x="2" y="6" width="1.5" height="1.2" fill="#ddd"/><rect x="1" y="9" width="2" height="1.2" fill="#ddd"/></svg>
<svg class="r" style="left:45px;top:747.6px;" width="208" height="118" viewBox="0 0 208 118"><rect width="208" height="118" fill="#fff"/><rect x="13.1" y="16.15" width="6.7" height="1.7" fill="#b80000" opacity="0.85"/><rect x="21.2" y="16.15" width="3.9" height="1.7" fill="#b80000" opacity="0.85"/><rect x="26.6" y="16.15" width="10.1" height="1.7" fill="#b80000" opacity="0.85"/><rect x="38.1" y="16.15" width="4.6" height="1.7" fill="#b80000" opacity="0.85"/><rect x="44.1" y="16.15" width="5.4" height="1.7" fill="#b80000" opacity="0.85"/><rect x="13.1" y="29.15" width="10.5" height="1.7" fill="#151515" opacity="0.68"/><rect x="25.0" y="29.15" width="3.1" height="1.7" fill="#151515" opacity="0.68"/><rect x="29.5" y="29.15" width="6.7" height="1.7" fill="#151515" opacity="0.68"/><rect x="37.6" y="29.15" width="9.6" height="1.7" fill="#151515" opacity="0.68"/><rect x="48.6" y="29.15" width="10.7" height="1.7" fill="#151515" opacity="0.68"/><rect x="60.7" y="29.15" width="6.6" height="1.7" fill="#151515" opacity="0.68"/><rect x="68.7" y="29.15" width="5.1" height="1.7" fill="#151515" opacity="0.68"/><rect x="75.3" y="29.15" width="4.7" height="1.7" fill="#151515" opacity="0.68"/><rect x="13.1" y="33.05" width="10.6" height="1.7" fill="#151515" opacity="0.68"/><rect x="25.1" y="33.05" width="4.7" height="1.7" fill="#151515" opacity="0.68"/><rect x="31.2" y="33.05" width="7.7" height="1.7" fill="#151515" opacity="0.68"/><rect x="40.2" y="33.05" width="4.1" height="1.7" fill="#151515" opacity="0.68"/><rect x="45.7" y="33.05" width="7.2" height="1.7" fill="#151515" opacity="0.68"/><rect x="54.3" y="33.05" width="3.7" height="1.7" fill="#151515" opacity="0.68"/><rect x="13.1" y="36.95" width="4.1" height="1.7" fill="#151515" opacity="0.68"/><rect x="18.6" y="36.95" width="9.6" height="1.7" fill="#151515" opacity="0.68"/><rect x="29.5" y="36.95" width="7.1" height="1.7" fill="#151515" opacity="0.68"/><rect x="38.0" y="36.95" width="10.1" height="1.7" fill="#151515" opacity="0.68"/><rect x="49.5" y="36.95" width="8.6" height="1.7" fill="#151515" opacity="0.68"/><rect x="59.5" y="36.95" width="4.9" height="1.7" fill="#151515" opacity="0.68"/><rect x="65.8" y="36.95" width="6.6" height="1.7" fill="#151515" opacity="0.68"/><rect x="13.1" y="40.75" width="6.9" height="1.7" fill="#151515" opacity="0.68"/><rect x="21.4" y="40.75" width="3.2" height="1.7" fill="#151515" opacity="0.68"/><rect x="26.0" y="40.75" width="3.0" height="1.7" fill="#151515" opacity="0.68"/><rect x="30.4" y="40.75" width="6.9" height="1.7" fill="#151515" opacity="0.68"/><rect x="38.8" y="40.75" width="6.6" height="1.7" fill="#151515" opacity="0.68"/><rect x="46.8" y="40.75" width="5.4" height="1.7" fill="#151515" opacity="0.68"/><rect x="53.6" y="40.75" width="4.1" height="1.7" fill="#151515" opacity="0.68"/><rect x="59.1" y="40.75" width="4.0" height="1.7" fill="#151515" opacity="0.68"/><rect x="13.1" y="44.65" width="5.5" height="1.7" fill="#151515" opacity="0.68"/><rect x="20.0" y="44.65" width="9.7" height="1.7" fill="#151515" opacity="0.68"/><rect x="31.2" y="44.65" width="3.0" height="1.7" fill="#151515" opacity="0.68"/><rect x="35.6" y="44.65" width="9.0" height="1.7" fill="#151515" opacity="0.68"/><rect x="46.0" y="44.65" width="9.7" height="1.7" fill="#151515" opacity="0.68"/><rect x="57.1" y="44.65" width="4.0" height="1.7" fill="#151515" opacity="0.68"/><rect x="62.4" y="44.65" width="10.4" height="1.7" fill="#151515" opacity="0.68"/><rect x="74.3" y="44.65" width="4.1" height="1.7" fill="#151515" opacity="0.68"/><rect x="13.1" y="48.55" width="10.2" height="1.7" fill="#151515" opacity="0.68"/><rect x="24.7" y="48.55" width="5.3" height="1.7" fill="#151515" opacity="0.68"/><rect x="31.4" y="48.55" width="6.0" height="1.7" fill="#151515" opacity="0.68"/><rect x="13.1" y="55.95" width="6.1" height="1.7" fill="#151515" opacity="0.68"/><rect x="20.6" y="55.95" width="11.0" height="1.7" fill="#151515" opacity="0.68"/><rect x="33.0" y="55.95" width="7.7" height="1.7" fill="#151515" opacity="0.68"/><rect x="42.1" y="55.95" width="5.9" height="1.7" fill="#151515" opacity="0.68"/><rect x="49.4" y="55.95" width="6.4" height="1.7" fill="#151515" opacity="0.68"/><rect x="57.3" y="55.95" width="5.2" height="1.7" fill="#151515" opacity="0.68"/><rect x="63.9" y="55.95" width="3.4" height="1.7" fill="#151515" opacity="0.68"/><rect x="68.6" y="55.95" width="3.8" height="1.7" fill="#151515" opacity="0.68"/><rect x="73.9" y="55.95" width="7.0" height="1.7" fill="#151515" opacity="0.68"/><rect x="13.1" y="59.35" width="5.3" height="1.7" fill="#151515" opacity="0.68"/><rect x="19.8" y="59.35" width="10.5" height="1.7" fill="#151515" opacity="0.68"/><rect x="31.7" y="59.35" width="5.0" height="1.7" fill="#151515" opacity="0.68"/><rect x="38.1" y="59.35" width="5.1" height="1.7" fill="#151515" opacity="0.68"/><rect x="44.6" y="59.35" width="7.1" height="1.7" fill="#151515" opacity="0.68"/><rect x="53.1" y="59.35" width="4.5" height="1.7" fill="#151515" opacity="0.68"/><rect x="59.0" y="59.35" width="6.0" height="1.7" fill="#151515" opacity="0.68"/><rect x="66.4" y="59.35" width="10.6" height="1.7" fill="#151515" opacity="0.68"/><rect x="78.4" y="59.35" width="2.5" height="1.7" fill="#151515" opacity="0.68"/><rect x="13.1" y="63.25" width="9.5" height="1.7" fill="#151515" opacity="0.68"/><rect x="24.0" y="63.25" width="8.0" height="1.7" fill="#151515" opacity="0.68"/><rect x="33.4" y="63.25" width="10.3" height="1.7" fill="#151515" opacity="0.68"/><rect x="45.2" y="63.25" width="10.5" height="1.7" fill="#151515" opacity="0.68"/><rect x="57.1" y="63.25" width="7.4" height="1.7" fill="#151515" opacity="0.68"/><rect x="65.9" y="63.25" width="4.1" height="1.7" fill="#151515" opacity="0.68"/><rect x="13.1" y="66.65" width="3.4" height="1.7" fill="#151515" opacity="0.68"/><rect x="17.9" y="66.65" width="8.9" height="1.7" fill="#151515" opacity="0.68"/><rect x="28.2" y="66.65" width="6.6" height="1.7" fill="#151515" opacity="0.68"/><rect x="36.2" y="66.65" width="4.8" height="1.7" fill="#151515" opacity="0.68"/><rect x="13.1" y="74.55" width="8.2" height="1.7" fill="#151515" opacity="0.68"/><rect x="22.7" y="74.55" width="5.3" height="1.7" fill="#151515" opacity="0.68"/><rect x="29.3" y="74.55" width="3.4" height="1.7" fill="#151515" opacity="0.68"/><rect x="34.1" y="74.55" width="10.4" height="1.7" fill="#151515" opacity="0.68"/><rect x="46.0" y="74.55" width="4.0" height="1.7" fill="#151515" opacity="0.68"/><rect x="51.4" y="74.55" width="6.8" height="1.7" fill="#151515" opacity="0.68"/><rect x="59.5" y="74.55" width="5.7" height="1.7" fill="#151515" opacity="0.68"/><rect x="66.7" y="74.55" width="5.3" height="1.7" fill="#151515" opacity="0.68"/><rect x="13.1" y="77.95" width="8.9" height="1.7" fill="#151515" opacity="0.68"/><rect x="23.4" y="77.95" width="10.8" height="1.7" fill="#151515" opacity="0.68"/><rect x="35.6" y="77.95" width="5.1" height="1.7" fill="#151515" opacity="0.68"/><rect x="42.1" y="77.95" width="8.2" height="1.7" fill="#151515" opacity="0.68"/><rect x="51.8" y="77.95" width="5.4" height="1.7" fill="#151515" opacity="0.68"/><rect x="58.6" y="77.95" width="7.5" height="1.7" fill="#151515" opacity="0.68"/><rect x="67.4" y="77.95" width="6.2" height="1.7" fill="#151515" opacity="0.68"/><rect x="13.1" y="81.75" width="4.3" height="1.7" fill="#151515" opacity="0.68"/><rect x="18.8" y="81.75" width="4.3" height="1.7" fill="#151515" opacity="0.68"/><rect x="24.5" y="81.75" width="4.7" height="1.7" fill="#151515" opacity="0.68"/><rect x="30.6" y="81.75" width="10.2" height="1.7" fill="#151515" opacity="0.68"/><rect x="42.2" y="81.75" width="7.0" height="1.7" fill="#151515" opacity="0.68"/><rect x="50.6" y="81.75" width="4.8" height="1.7" fill="#151515" opacity="0.68"/><rect x="56.8" y="81.75" width="10.3" height="1.7" fill="#151515" opacity="0.68"/><rect x="68.4" y="81.75" width="10.0" height="1.7" fill="#151515" opacity="0.68"/><rect x="13.1" y="85.65" width="6.6" height="1.7" fill="#151515" opacity="0.68"/><rect x="21.1" y="85.65" width="4.1" height="1.7" fill="#151515" opacity="0.68"/><rect x="26.6" y="85.65" width="4.5" height="1.7" fill="#151515" opacity="0.68"/><rect x="32.6" y="85.65" width="3.7" height="1.7" fill="#151515" opacity="0.68"/><rect x="37.7" y="85.65" width="5.7" height="1.7" fill="#151515" opacity="0.68"/><rect x="44.8" y="85.65" width="3.7" height="1.7" fill="#151515" opacity="0.68"/><rect x="49.9" y="85.65" width="4.9" height="1.7" fill="#151515" opacity="0.68"/><rect x="56.3" y="85.65" width="5.1" height="1.7" fill="#151515" opacity="0.68"/><rect x="62.7" y="85.65" width="7.3" height="1.7" fill="#151515" opacity="0.68"/><rect x="13.1" y="92.75" width="10.1" height="1.7" fill="#151515" opacity="0.68"/><rect x="24.6" y="92.75" width="9.0" height="1.7" fill="#151515" opacity="0.68"/><rect x="35.0" y="92.75" width="6.3" height="1.7" fill="#151515" opacity="0.68"/><rect x="42.7" y="92.75" width="6.3" height="1.7" fill="#151515" opacity="0.68"/><rect x="50.4" y="92.75" width="7.2" height="1.7" fill="#151515" opacity="0.68"/><rect x="59.0" y="92.75" width="6.0" height="1.7" fill="#151515" opacity="0.68"/><rect x="13.1" y="96.65" width="5.7" height="1.7" fill="#151515" opacity="0.68"/><rect x="20.2" y="96.65" width="3.5" height="1.7" fill="#151515" opacity="0.68"/><rect x="25.1" y="96.65" width="5.2" height="1.7" fill="#151515" opacity="0.68"/><rect x="31.7" y="96.65" width="10.7" height="1.7" fill="#151515" opacity="0.68"/><rect x="43.9" y="96.65" width="4.0" height="1.7" fill="#151515" opacity="0.68"/><rect x="49.3" y="96.65" width="7.0" height="1.7" fill="#151515" opacity="0.68"/><rect x="57.7" y="96.65" width="8.0" height="1.7" fill="#151515" opacity="0.68"/><rect x="67.1" y="96.65" width="9.9" height="1.7" fill="#151515" opacity="0.68"/><rect x="78.4" y="96.65" width="2.5" height="1.7" fill="#151515" opacity="0.68"/><rect x="13.1" y="100.55" width="5.2" height="1.7" fill="#151515" opacity="0.68"/><rect x="19.7" y="100.55" width="5.0" height="1.7" fill="#151515" opacity="0.68"/><rect x="26.1" y="100.55" width="6.2" height="1.7" fill="#151515" opacity="0.68"/><rect x="33.7" y="100.55" width="6.6" height="1.7" fill="#151515" opacity="0.68"/><rect x="41.6" y="100.55" width="10.6" height="1.7" fill="#151515" opacity="0.68"/><rect x="53.7" y="100.55" width="6.3" height="1.7" fill="#151515" opacity="0.68"/><rect x="100.4" y="15.3" width="38" height="18.6" rx="1.5" fill="#ececec"/><rect x="101.5" y="74.6" width="37" height="17.8" rx="1.5" fill="#ececec"/><rect x="102" y="94.9" width="37" height="10" rx="1.5" fill="#ececec"/><rect x="102" y="17.0" width="32" height="1" fill="#777"/><rect x="102" y="19.8" width="32" height="1" fill="#777"/><rect x="102" y="22.6" width="32" height="1" fill="#777"/><rect x="102" y="25.4" width="32" height="1" fill="#777"/><rect x="102" y="28.2" width="32" height="1" fill="#777"/><rect x="103" y="76.0" width="32" height="1" fill="#777"/><rect x="103" y="78.8" width="32" height="1" fill="#777"/><rect x="103" y="81.6" width="32" height="1" fill="#777"/><rect x="103" y="84.4" width="32" height="1" fill="#777"/><rect x="103" y="87.2" width="32" height="1" fill="#777"/><rect x="103" y="38.2" width="32" height="33.9" rx="2" fill="#bcb2a6"/><path d="M107 60l12-14 10 6-6 18z" fill="#2a2a2a"/><path d="M115 62l10-12 8 10-8 10z" fill="#e8e4df"/><circle cx="97" cy="33" r="1.6" fill="#333"/><circle cx="99" cy="90" r="1.6" fill="#333"/><circle cx="152" cy="26" r="1.6" fill="#333"/><rect x="158.8" y="20.4" width="39.8" height="11.9" rx="1.5" fill="#ececec"/><rect x="160" y="23" width="34" height="1" fill="#777"/><rect x="160" y="26" width="34" height="1" fill="#777"/><rect x="160" y="29" width="20" height="1" fill="#777"/><defs><linearGradient id="g13" x1="0" y1="0" x2="0" y2="1"><stop offset="0" stop-color="#7b3ff0"/><stop offset="1" stop-color="#3f7ae9"/></linearGradient></defs><rect x="163.9" y="33.9" width="44.0" height="55.1" rx="2" fill="url(#g13)"/><rect x="166.4" y="37.9" width="26.4" height="1.1" fill="#fff" opacity=".3"/><rect x="166.4" y="41.1" width="35.2" height="1.1" fill="#fff" opacity=".3"/><rect x="166.4" y="44.300000000000004" width="35.2" height="1.1" fill="#fff" opacity=".3"/><rect x="166.4" y="47.50000000000001" width="26.4" height="1.1" fill="#fff" opacity=".3"/><rect x="166.4" y="53.90000000000001" width="35.2" height="1.1" fill="#fff" opacity=".3"/><rect x="166.4" y="57.100000000000016" width="26.4" height="1.1" fill="#fff" opacity=".3"/><rect x="166.4" y="60.30000000000002" width="35.2" height="1.1" fill="#fff" opacity=".3"/><rect x="166.4" y="63.50000000000002" width="35.2" height="1.1" fill="#fff" opacity=".3"/><rect x="166.4" y="69.90000000000002" width="35.2" height="1.1" fill="#fff" opacity=".3"/><rect x="166.4" y="73.10000000000002" width="35.2" height="1.1" fill="#fff" opacity=".3"/><rect x="166.4" y="76.30000000000003" width="26.4" height="1.1" fill="#fff" opacity=".3"/><rect x="166.4" y="79.50000000000003" width="35.2" height="1.1" fill="#fff" opacity=".3"/><rect x="166.4" y="85.90000000000003" width="26.4" height="1.1" fill="#fff" opacity=".3"/></svg>
<div class="t " style="left:6.100000000000001px;top:744.91px;font-size:17px;color:#e8e8e8;font-weight:400;">13</div>
<svg class="r" style="left:11px;top:765.1px;" width="16" height="13" viewBox="0 0 16 13"><path d="M8.5 0.8l1.9 4 4.4.5-3.3 3 1 4.3-4-2.3-4 2.3 1-4.3-3.3-3 4.4-.5z" fill="#f0f0f0"/><rect x="1" y="3" width="2" height="1.2" fill="#ddd"/><rect x="2" y="6" width="1.5" height="1.2" fill="#ddd"/><rect x="1" y="9" width="2" height="1.2" fill="#ddd"/></svg>
<svg class="r" style="left:45px;top:890px;" width="208" height="1" viewBox="0 0 208 1"><rect width="208" height="1" fill="#e8e8e8"/></svg>
<div class="t " style="left:7px;top:887.61px;font-size:17px;color:#e8e8e8;font-weight:400;">14</div>
<div class="r" style="left:461px;top:165px;width:1282px;height:721px;background:#ffffff;"></div>
<div class="t " style="left:541.5px;top:260.86px;font-size:18px;color:#a8121c;font-weight:400;transform:scaleX(1.4596);transform-origin:0 0;">4 Референсы и презентация.</div>
<div class="t " style="left:541.5px;top:314.68px;font-size:22px;color:#a8121c;font-weight:400;transform:scaleX(1.1543);transform-origin:0 0;">Презентация – нужна для того, что бы собрать всю</div>
<div class="t " style="left:541.5px;top:343.38px;font-size:22px;color:#a8121c;font-weight:400;transform:scaleX(1.2114);transform-origin:0 0;">важную информацию из диалогов в одном</div>
<div class="t " style="left:541.5px;top:371.98px;font-size:22px;color:#a8121c;font-weight:400;transform:scaleX(1.2474);transform-origin:0 0;">месте.</div>
<div class="t " style="left:541.5px;top:426.82px;font-size:19px;color:#2c2c2c;font-weight:400;transform:scaleX(1.2445);transform-origin:0 0;">Рассказываем коротко о себе, контактная</div>
<div class="t " style="left:541.5px;top:452.92px;font-size:19px;color:#2c2c2c;font-weight:400;transform:scaleX(1.2673);transform-origin:0 0;">информация, общая концепция съемки, референсы,</div>
<div class="t " style="left:541.5px;top:478.32px;font-size:19px;color:#2c2c2c;font-weight:400;transform:scaleX(1.2448);transform-origin:0 0;">список одежды, условия, тайминг, адрес и проход к</div>
<div class="t " style="left:541.5px;top:503.72px;font-size:19px;color:#2c2c2c;font-weight:400;transform:scaleX(1.21);transform-origin:0 0;">студии.</div>
<div class="t " style="left:541.5px;top:555.92px;font-size:19px;color:#2c2c2c;font-weight:400;transform:scaleX(1.2294);transform-origin:0 0;">В нескольких слайдах я прикрепляю референсы</div>
<div class="t " style="left:541.5px;top:581.82px;font-size:19px;color:#2c2c2c;font-weight:400;transform:scaleX(1.2163);transform-origin:0 0;">(вдохновляющие кадры к съемке) где будут собраны те</div>
<div class="t " style="left:541.5px;top:607.92px;font-size:19px;color:#2c2c2c;font-weight:400;transform:scaleX(1.2159);transform-origin:0 0;">кадры которые выслал клиент как пример и те кадры</div>
<div class="t " style="left:541.5px;top:633.12px;font-size:19px;color:#2c2c2c;font-weight:400;transform:scaleX(1.2146);transform-origin:0 0;">которые я в дополнение подобрала в стиль съемки.</div>
<div class="t " style="left:541.5px;top:658.92px;font-size:19px;color:#2c2c2c;font-weight:400;transform:scaleX(1.2483);transform-origin:0 0;">Референсы состоят как из моих работа так и работ</div>
<div class="t " style="left:541.5px;top:684.52px;font-size:19px;color:#2c2c2c;font-weight:400;transform:scaleX(1.2631);transform-origin:0 0;">других фотографов.</div>
<div class="t " style="left:541.5px;top:735.92px;font-size:19px;color:#2c2c2c;font-weight:400;transform:scaleX(1.242);transform-origin:0 0;">Основываясь на рефренсах клиенту будет проще</div>
<div class="t " style="left:541.5px;top:761.32px;font-size:19px;color:#2c2c2c;font-weight:400;transform:scaleX(1.2361);transform-origin:0 0;">подобрать одежду, и ориентироваться по позировкам.</div>
<svg class="r" style="left:720px;top:754px;" width="134" height="4" viewBox="0 0 134 4"><path d="M0 2l1.5 -1.5l1.5 1.5l1.5 -1.5l1.5 1.5l1.5 -1.5l1.5 1.5l1.5 -1.5l1.5 1.5l1.5 -1.5l1.5 1.5l1.5 -1.5l1.5 1.5l1.5 -1.5l1.5 1.5l1.5 -1.5l1.5 1.5l1.5 -1.5l1.5 1.5l1.5 -1.5l1.5 1.5l1.5 -1.5l1.5 1.5l1.5 -1.5l1.5 1.5l1.5 -1.5l1.5 1.5l1.5 -1.5l1.5 1.5l1.5 -1.5l1.5 1.5l1.5 -1.5l1.5 1.5l1.5 -1.5l1.5 1.5l1.5 -1.5l1.5 1.5l1.5 -1.5l1.5 1.5l1.5 -1.5l1.5 1.5l1.5 -1.5l1.5 1.5l1.5 -1.5l1.5 1.5l1.5 -1.5l1.5 1.5l1.5 -1.5l1.5 1.5l1.5 -1.5l1.5 1.5l1.5 -1.5l1.5 1.5l1.5 -1.5l1.5 1.5l1.5 -1.5l1.5 1.5l1.5 -1.5l1.5 1.5l1.5 -1.5l1.5 1.5l1.5 -1.5l1.5 1.5l1.5 -1.5l1.5 1.5l1.5 -1.5l1.5 1.5l1.5 -1.5l1.5 1.5l1.5 -1.5l1.5 1.5l1.5 -1.5l1.5 1.5l1.5 -1.5l1.5 1.5l1.5 -1.5l1.5 1.5l1.5 -1.5l1.5 1.5l1.5 -1.5l1.5 1.5l1.5 -1.5l1.5 1.5l1.5 -1.5l1.5 1.5l1.5 -1.5l1.5 1.5l1.5 -1.5l1.5 1.5" fill="none" stroke="#d22" stroke-width="0.9"/></svg>
<svg class="r" style="left:999px;top:451px;" width="10" height="17" viewBox="0 0 10 17"><path d="M2 1h2.5c.8 0 1 .5 1 1v13c0 .5.2 1 1 1H9M1 16h2.5c.8 0 1-.5 1-1M5.5 2c0-.5.2-1 1-1H9M3 8.5h4" fill="none" stroke="#222" stroke-width="1.1"/></svg>
<div class="r" style="left:1387px;top:249px;width:277px;height:571px;background:linear-gradient(180deg,#7a3ef1 0%,#5a4ff0 35%,#4a5fee 60%,#3d78e9 100%);border-radius:3px"></div>
<div class="t " style="left:1399.4px;top:503.73px;font-size:14.5px;color:#f4f5ff;font-weight:400;transform:scaleX(1.0811);transform-origin:0 0;">референсы из презентации</div>
<div class="t " style="left:1399.4px;top:524.03px;font-size:14.5px;color:#f4f5ff;font-weight:400;transform:scaleX(1.0801);transform-origin:0 0;">Можешь прям в диалог прислать</div>
<div class="t " style="left:1399.4px;top:543.43px;font-size:14.5px;color:#f4f5ff;font-weight:400;transform:scaleX(1.0906);transform-origin:0 0;">варианты одежды ( можно просто</div>
<div class="t " style="left:1399.4px;top:562.33px;font-size:14.5px;color:#f4f5ff;font-weight:400;transform:scaleX(1.0863);transform-origin:0 0;">разложить вещи на кровати и</div>
<div class="t " style="left:1399.4px;top:581.53px;font-size:14.5px;color:#f4f5ff;font-weight:400;transform:scaleX(1.0536);transform-origin:0 0;">прислать фото )</div>
<div class="t " style="left:1399.4px;top:625.43px;font-size:14.5px;color:#f4f5ff;font-weight:400;transform:scaleX(1.0879);transform-origin:0 0;">В презентации несколько</div>
<div class="t " style="left:1399.4px;top:644.23px;font-size:14.5px;color:#f4f5ff;font-weight:400;transform:scaleX(1.0771);transform-origin:0 0;">вариантов образов, в целом</div>
<div class="t " style="left:1399.4px;top:663.13px;font-size:14.5px;color:#f4f5ff;font-weight:400;transform:scaleX(1.0928);transform-origin:0 0;">посмотри что тебе ближе, что</div>
<div class="t " style="left:1399.4px;top:681.93px;font-size:14.5px;color:#f4f5ff;font-weight:400;transform:scaleX(1.0642);transform-origin:0 0;">нравится тебе.</div>
<div class="t " style="left:1399.4px;top:702.03px;font-size:14.5px;color:#f4f5ff;font-weight:400;transform:scaleX(1.0768);transform-origin:0 0;">Там кадры в базовой одежде,</div>
<div class="t " style="left:1399.4px;top:722.03px;font-size:14.5px;color:#f4f5ff;font-weight:400;transform:scaleX(1.0823);transform-origin:0 0;">платья, колготки, белье, так же в</div>
<div class="t " style="left:1399.4px;top:740.93px;font-size:14.5px;color:#f4f5ff;font-weight:400;transform:scaleX(1.0824);transform-origin:0 0;">дополнение кадры с цветами и тд</div>
<div class="t " style="left:1399.4px;top:802.13px;font-size:14.5px;color:#f4f5ff;font-weight:400;transform:scaleX(1.0698);transform-origin:0 0;">Хорошего дня</div>
<div class="t " style="left:1547.57230078125px;top:302.53px;font-size:14.5px;color:#f4f5ff;font-weight:400;transform:scaleX(1.1);transform-origin:0 0;">информацию</div>
<div class="t " style="left:1572.8585859374998px;top:406.23px;font-size:14.5px;color:#f4f5ff;font-weight:400;transform:scaleX(1.1);transform-origin:0 0;">удобнее.</div>
<div class="t " style="left:1566.9639023437499px;top:447.33px;font-size:14.5px;color:#f4f5ff;font-weight:400;transform:scaleX(1.1);transform-origin:0 0;">прислать</div>
<svg class="r" style="left:1601px;top:502px;" width="20" height="18" viewBox="0 0 20 18"><path d="M12 1c.8 4 2 5.5 6 6.5-4 1-5.2 2.5-6 6.5-.8-4-2-5.5-6-6.5 4-1 5.2-2.5 6-6.5z" fill="#f7d774"/><path d="M5 10c.4 2 1 2.8 3 3.2-2 .4-2.6 1.2-3 3.2-.4-2-1-2.8-3-3.2 2-.4 2.6-1.2 3-3.2z" fill="#f7d774"/></svg>
<svg class="r" style="left:1399px;top:758px;" width="21" height="20" viewBox="0 0 21 20"><path d="M3 4c6-4 16 2 15 9-1 5-7 5-9 2" fill="none" stroke="#f2c94c" stroke-width="2.2"/><path d="M6 9l1 2.5 2.5.5-2 1.5.5 2.5-2-1.4-2 1.4.5-2.5-2-1.5 2.5-.5z" fill="#f7d774"/></svg>
<svg class="r" style="left:1506px;top:801px;" width="21" height="18" viewBox="0 0 21 18"><path d="M10.5 17C4 12 1 9 1 5.5 1 3 3 1 5.5 1c2 0 3.8 1.2 5 3 1.2-1.8 3-3 5-3C18 1 20 3 20 5.5 20 9 17 12 10.5 17z" fill="#f4f4f4"/></svg>
<svg class="r" style="left:1285px;top:117px;" width="337" height="186.6" viewBox="0 0 337 186.6"><defs>
<filter id="bl1" x="-20%" y="-20%" width="140%" height="140%"><feGaussianBlur stdDeviation="2.6"/></filter>
<filter id="bl2" x="-20%" y="-20%" width="140%" height="140%"><feGaussianBlur stdDeviation="1.2"/></filter>
<linearGradient id="wall" x1="0" y1="0" x2="1" y2="0"><stop offset="0" stop-color="#aca6a2"/><stop offset="1" stop-color="#8f8d8a"/></linearGradient>
<linearGradient id="hairg" x1="0" y1="0" x2="1" y2="0"><stop offset="0" stop-color="#2a2226"/><stop offset=".55" stop-color="#3c3438"/><stop offset="1" stop-color="#5e5658"/></linearGradient>
<linearGradient id="ceil" x1="0" y1="0" x2="0" y2="1"><stop offset="0" stop-color="#8a9092"/><stop offset=".6" stop-color="#a6aaac"/><stop offset="1" stop-color="#7c8082"/></linearGradient>
</defs>
<rect width="337" height="187" fill="url(#wall)"/>
<g filter="url(#bl1)">
<rect x="-5" y="-5" width="90" height="70" fill="url(#ceil)"/>
<rect x="-5" y="55" width="90" height="140" fill="#b8bcbd"/>
<rect x="-5" y="-5" width="14" height="200" fill="#5d6265"/>
<rect x="15" y="62" width="60" height="36" fill="#e9edee"/>
<rect x="22" y="125" width="50" height="40" fill="#e2e4e4"/>
<path d="M-5 100c15-12 40-22 62-22 12 0 20 4 28 12l12 30-2 25c-8 8-15 10-25 5l-20-25c-15 0-30 10-55 25z" fill="#e4dde3"/>
<path d="M-5 150c10-10 25-25 45-35l0 20c-15 8-30 25-45 40z" fill="#dcd5db"/>
<path d="M70 -5h26l-4 40-10 20z" fill="#3d2d32"/>
<path d="M80 120l22-5 10 45-25 30-15-10z" fill="#4a3c40"/>
<path d="M192 -5h34c8 50 12 90 14 130s2 50 0 70h-66c2-30 8-50 12-80s2-70 6-120z" fill="url(#hairg)"/>
<path d="M88 -5h108c6 40 8 80 4 110-4 30-18 52-40 56-20 3-40-2-52-22-10-20-16-60-20-144z" fill="#ebe3e9"/>
<path d="M104 160c20 8 50 6 75-4l-2 35h-72z" fill="#8e8488"/>
<path d="M230 128c28-6 52 22 58 62h-60z" fill="#cbc3c0"/>
</g>
<g filter="url(#bl2)">
<path d="M72 62c8-10 34-12 44-2" stroke="#b8a4dc" stroke-width="9" fill="none" opacity=".75"/>
<path d="M142 64c12-10 42-10 54 2" stroke="#b8a4dc" stroke-width="9" fill="none" opacity=".75"/>
<circle cx="103" cy="61" r="4.8" fill="#4b3b57"/>
<circle cx="160" cy="63" r="4.8" fill="#4b3b57"/>
<path d="M136 78c2 10 4 18 2 24" fill="none" stroke="#d3c3cb" stroke-width="5"/><ellipse cx="128" cy="104" rx="9" ry="4" fill="#dccbd3"/>
<path d="M112 122c8 3 22 3 30 0" stroke="#c9a2ae" stroke-width="4.5" fill="none"/>
<rect x="42" y="0" width="3" height="72" fill="#2a2a2a"/>
<rect x="42" y="128" width="2" height="40" fill="#2a2a2a"/>
</g>
<ellipse cx="93" cy="66.5" rx="25" ry="19.5" fill="none" stroke="#8a7f7c" stroke-width="1.4"/>
<ellipse cx="168" cy="70" rx="31.5" ry="20" fill="none" stroke="#8a7f7c" stroke-width="1.4"/>
<path d="M118 60c5-2 14-2 19 0" stroke="#a09490" stroke-width="1.4" fill="none"/>
</svg>
<div class="r" style="left:1285px;top:277.5px;width:163px;height:24px;background:rgba(34,34,34,0.7);"></div>
<div class="t " style="left:1289px;top:282.48px;font-size:15.5px;color:#f4f0e6;font-weight:400;transform:scaleX(1.054);transform-origin:0 0;text-shadow:0 0 .4px #fff">Евгения Прокопенко</div>
<div class="r" style="left:1285px;top:303.6px;width:337px;height:197px;background:#1c1c1c;"></div>
<div class="r" style="left:1285px;top:303.6px;width:204px;height:2.8px;background:#dcdcdc;"></div>
<svg class="r" style="left:1384px;top:307px;" width="147" height="194" viewBox="0 0 147 194"><defs>
<filter id="bl3" x="-20%" y="-20%" width="140%" height="140%"><feGaussianBlur stdDeviation="2.2"/></filter>
<filter id="bl4" x="-20%" y="-20%" width="140%" height="140%"><feGaussianBlur stdDeviation="1"/></filter>
<linearGradient id="w2" x1="0" y1="0" x2="1" y2="1"><stop offset="0" stop-color="#d6d6d6"/><stop offset="1" stop-color="#c4c4c4"/></linearGradient>
</defs>
<rect width="147" height="194" fill="url(#w2)"/>
<g filter="url(#bl3)">
<path d="M98 -5h54v90l-42 0z" fill="#ececec"/>
<path d="M106 2c6 15 12 30 10 50M122 6c4 18 8 36 4 56" stroke="#b4b4b4" stroke-width="5" fill="none" opacity=".6"/>
<path d="M18 100c30-20 90-25 110-10l4 100h-120z" fill="#d3b8ac"/>
<ellipse cx="77" cy="58" rx="21" ry="30" fill="#d9c4bb"/>
<path d="M56 40c-1-16 8-22 21-22s23 6 22 22c-8-9-34-9-43 0z" fill="#5e4a40"/>
<path d="M97 50c3 10 2 25-2 35" stroke="#6a5448" stroke-width="4" fill="none"/>
<path d="M64 112h32l-6 45h-24z" fill="#d6a9a6"/>
<path d="M-5 122c25-12 62-10 92 20l18 30c-30 10-80 5-110-5z" fill="#dcc6bd"/>
<path d="M3 100c12-12 35-12 50 0l3 35c-18 5-38 5-53 0z" fill="#826a5a"/>
<path d="M-5 148c22-8 45-4 55 8l-2 45h-58z" fill="#544238"/>
<path d="M112 75c18-8 40 5 40 30v95h-40c-6-45-4-90 0-125z" fill="#dcd5c8"/>
<path d="M126 100l6 30-8 14" stroke="#4a4844" stroke-width="3" fill="none" opacity=".8"/>
<path d="M38 172c20-8 50-8 68 0v28h-68z" fill="#d0c0ba"/>
</g>
<g filter="url(#bl4)">
<circle cx="70" cy="56" r="1.8" fill="#6a5a54"/>
<circle cx="86" cy="55" r="1.8" fill="#6a5a54"/>
<ellipse cx="76" cy="74" rx="4.5" ry="2" fill="#9a6a66"/>
</g>
</svg>
<div class="r" style="left:1285px;top:476px;width:36px;height:24.5px;background:#2a2a2a;"></div>
<div class="t " style="left:1289px;top:482.73px;font-size:14.5px;color:#f0f0f0;font-weight:400;transform:scaleX(0.9983);transform-origin:0 0;">Яна</div>
</body></html>
